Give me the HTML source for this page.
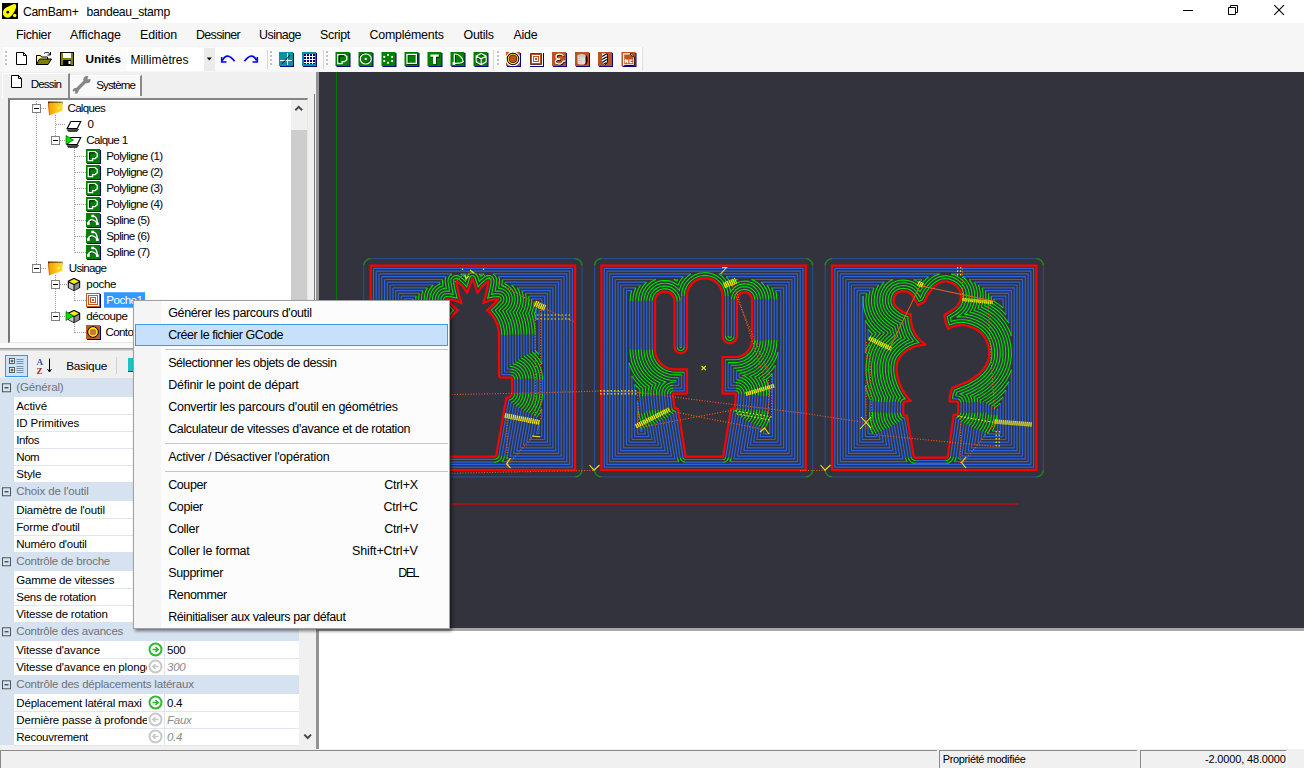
<!DOCTYPE html>
<html lang="fr">
<head>
<meta charset="utf-8">
<title>CamBam+ bandeau_stamp</title>
<style>
*{box-sizing:border-box;margin:0;padding:0}
html,body{width:1304px;height:768px;overflow:hidden;background:#f0f0f0}
body{position:relative;font-family:"Liberation Sans",sans-serif;font-size:12px;color:#000}
.abs{position:absolute}
.t{position:absolute;white-space:nowrap;line-height:1}
/* title bar */
#title{left:0;top:0;width:1304px;height:23px;background:#fff}
#menubar{left:0;top:23px;width:1304px;height:24px;background:#f6f6f6}
#toolbar{left:0;top:47px;width:1304px;height:25px;background:#f6f6f6}
#strip{left:3px;top:47px;width:640px;height:24px;background:linear-gradient(#fdfdfd,#f8f8f9);border-right:1px solid #e0e0e0}
.mi{position:absolute;top:28px;font-size:12.4px;line-height:14px;white-space:nowrap;color:#000}
/* left panel */
#left{left:0;top:72px;width:316px;height:677px;background:#f0f0f0}
#tree{left:8px;top:98px;width:300px;height:245px;background:#fff;border:1px solid #e6e6e6;border-top:2px solid #858585;border-left:2px solid #757575}
.tr{position:absolute;font-size:11px;line-height:13px;white-space:nowrap}
/* property grid */
.cat{position:absolute;left:0;width:299px;background:#d7e2f0}
.catt{position:absolute;left:16.300px;font-size:11.500px;color:#6d727c;white-space:nowrap;line-height:13px}
.pl{position:absolute;left:16.300px;font-size:11.500px;white-space:nowrap;line-height:13px;color:#000}
.pv{position:absolute;left:167px;font-size:11.500px;letter-spacing:-.250px;white-space:nowrap;line-height:13px}
/* context menu */
#ctx{left:133px;top:300px;width:317px;height:329px;background:#fcfcfc;border:1px solid #a0a0a0;box-shadow:2px 2px 3px rgba(0,0,0,.5)}
.cm{position:absolute;left:34px;font-size:12.4px;line-height:14px;white-space:nowrap;color:#000}
.ck{position:absolute;right:31px;font-size:12.4px;line-height:14px;white-space:nowrap;color:#000;text-align:right}
.sep{position:absolute;left:30px;width:283px;height:1px;background:#bdbdbd}
</style>
</head>
<body>
<!-- ===== title bar ===== -->
<div class="abs" id="title"></div>
<svg class="abs" style="left:2px;top:3px" width="16" height="16" viewBox="0 0 16 16">
  <rect width="16" height="16" fill="#000"/>
  <path d="M13.200 1.300 C15.200 2.300 14 6 12 9.200 C10.200 12.400 8 15.200 4.800 14.600 C1.400 14 0.200 10.600 1.300 7.800 C2.500 4.900 5.800 4 8.400 2.600 C10.300 1.600 12 0.600 13.200 1.300Z" fill="#ffff00"/>
  <circle cx="5.8" cy="9.2" r="1.35" fill="#000"/>
  <circle cx="12.7" cy="12.6" r="1.75" fill="#ffff00"/>
</svg>
<svg class="abs" style="left:1170px;top:0" width="134" height="23" viewBox="0 0 134 23" fill="none" stroke="#000" stroke-width="1">
  <path d="M13 10.5H23"/>
  <path d="M58.5 7.5h7v7h-7z M60.5 7.5v-2h7v7h-2"/>
  <path d="M104.3 5.2l9.6 9.6M113.9 5.2l-9.6 9.6" stroke-width="1.1"/>
</svg>
<!-- ===== menu bar ===== -->
<div class="abs" id="menubar"></div>
<!-- ===== toolbar ===== -->
<div class="abs" id="toolbar"></div>
<div class="abs" id="strip"></div>
<svg class="abs" style="left:0;top:47px" width="660" height="25" viewBox="0 0 660 25">
  <defs>
    <g id="grip" fill="#c3c3c3"><rect x="0" y="4" width="2" height="2"/><rect x="0" y="8" width="2" height="2"/><rect x="0" y="12" width="2" height="2"/><rect x="0" y="16" width="2" height="2"/></g>
    <g id="tb"><rect x="1" y="1" width="14" height="14" fill="#000080"/></g>
  </defs>
  <use href="#grip" x="5" y="0"/>
  <!-- new -->
  <path d="M16.5 5.5h7l3 3v9h-10z" fill="#fff" stroke="#000"/><path d="M23.5 5.5v3h3" fill="none" stroke="#000"/>
  <!-- open -->
  <path d="M36.5 17.5v-9h4l1 1.5h6v2" fill="#ffff80" stroke="#000" stroke-width="1"/>
  <path d="M36.5 17.5l3-5.5h12l-3.5 5.5z" fill="#808000" stroke="#000" stroke-width="1"/>
  <path d="M44 6.5c2-1.5 4.5-1.5 6 .8M50.5 5v3h-3" fill="none" stroke="#000" stroke-width="1"/>
  <!-- save -->
  <rect x="60.5" y="5.500" width="13" height="13" fill="#808000" stroke="#000"/>
  <rect x="63" y="6" width="8" height="5" fill="#fff"/><rect x="63" y="13" width="8" height="5" fill="#000"/><rect x="68.500" y="14" width="2" height="3" fill="#fff"/>
  <!-- combo -->
  <rect x="126" y="1" width="78" height="23" fill="#fff"/>
  <rect x="204" y="1" width="11" height="23" fill="#ebebeb"/>
  <path d="M206.800 10.500h5l-2.500 3z" fill="#000"/>
  <!-- undo / redo -->
  <path d="M222.300 13.500Q227 4.500 234.600 14.300" fill="none" stroke="#00f" stroke-width="1.700"/><path d="M220.900 10v5.800h5.600v-1.600h-4v-4.200z" fill="#00f"/>
  <path d="M256.700 13.500Q252 4.500 244.400 14.300" fill="none" stroke="#00f" stroke-width="1.700"/><path d="M258.100 10v5.800h-5.600v-1.600h4v-4.200z" fill="#00f"/>
  <rect x="267" y="3" width="1" height="19" fill="#d8d8d8"/>
  <use href="#grip" x="270" y="0"/>
  <!-- snap -->
  <g transform="translate(279,5)"><rect x="1" y="1" width="14" height="14" fill="#000080"/><rect width="14" height="14" fill="#0892a5"/>
    <path d="M8.500 1v12M1 8.500h12" stroke="#fff" stroke-width="1"/><path d="M3 12l8-9" stroke="#003" stroke-width="1"/></g>
  <!-- grid -->
  <g transform="translate(302,5)"><rect x="1" y="1" width="14" height="14" fill="#000080"/><rect width="14" height="14" fill="#0892a5"/>
    <rect x="2" y="2" width="11" height="10" fill="#000080"/>
    <path d="M2 4.500h11M2 7.500h11M2 10.500h11M4.500 2v10M7.500 2v10M10.500 2v10" stroke="#fff" stroke-width="1"/></g>
  <rect x="323" y="3" width="1" height="19" fill="#d8d8d8"/>
  <use href="#grip" x="326" y="0"/>
  <!-- green icons -->
  <g transform="translate(335.500,5)"><rect x="1" y="1" width="14" height="14" fill="#000080"/><rect width="14" height="14" fill="#008000"/>
    <path d="M2.300 2.600h6.700l2.300 1.900v3.200l-2.300 1.900h-2.400v2.100h-4.300z" fill="#008000" stroke="#fff" stroke-width="1.300"/><path d="M3.600 10.300v-6.400h5" stroke="#000" stroke-width="1" fill="none"/></g>
  <g transform="translate(358.500,5)"><rect x="1" y="1" width="14" height="14" fill="#000080"/><rect width="14" height="14" fill="#008000"/>
    <ellipse cx="6.600" cy="6.300" rx="5.500" ry="5.100" fill="none" stroke="#000" stroke-width="1"/><ellipse cx="7.200" cy="6.900" rx="5.500" ry="5.100" fill="none" stroke="#fff" stroke-width="1.200"/><rect x="6.200" y="5.900" width="2" height="2" fill="#fff"/></g>
  <g transform="translate(381.500,5)"><rect x="1" y="1" width="14" height="14" fill="#000080"/><rect width="14" height="14" fill="#008000"/>
    <g fill="#fff"><rect x="5.600" y="1.900" width="1.900" height="1.900"/><rect x="9.700" y="3.900" width="1.900" height="1.900"/><rect x="9.700" y="8" width="1.900" height="1.900"/><rect x="5.600" y="9.800" width="1.900" height="1.900"/><rect x="1.800" y="8" width="1.900" height="1.900"/><rect x="1.800" y="3.900" width="1.900" height="1.900"/></g></g>
  <g transform="translate(404.500,5)"><rect x="1" y="1" width="14" height="14" fill="#000080"/><rect width="14" height="14" fill="#008000"/>
    <rect x="3.300" y="3.200" width="9.300" height="8.900" fill="none" stroke="#000" stroke-width="1"/><rect x="2.500" y="2.500" width="9.300" height="8.900" fill="none" stroke="#fff" stroke-width="1.300"/></g>
  <g transform="translate(427.500,5)"><rect x="1" y="1" width="14" height="14" fill="#000080"/><rect width="14" height="14" fill="#008000"/>
    <path d="M3.600 3h8.400v2.400h-2.700v7.200h-3v-7.200h-2.700z" fill="#000"/><path d="M2.900 2.400h8.400v2.400h-2.700v7.200h-3v-7.200h-2.700z" fill="#fff"/></g>
  <g transform="translate(450.500,5)"><rect x="1" y="1" width="14" height="14" fill="#000080"/><rect width="14" height="14" fill="#008000"/>
    <path d="M4.500 12.200v-9.600c4.500 0 8.400 3.300 9 7.600l-2 1.200z" fill="none" stroke="#000" stroke-width="1"/><path d="M3.800 11.600v-9.600c4.500 0 8.400 3.300 9 7.600l-2 1.200z" fill="none" stroke="#fff" stroke-width="1.200"/><rect x="2" y="10" width="2.800" height="2.800" fill="#fff"/></g>
  <g transform="translate(473.500,5)"><rect x="1" y="1" width="14" height="14" fill="#000080"/><rect width="14" height="14" fill="#008000"/>
    <path d="M7.600 1.500l5 2.700v5.600l-5 2.900-5-2.900v-5.600zM2.600 4.200l5 2.700 5-2.700M7.600 6.900v5.800" fill="none" stroke="#000" stroke-width="1" transform="translate(-.7,.6)"/>
    <path d="M7.600 1.500l5 2.700v5.600l-5 2.900-5-2.900v-5.600zM2.600 4.200l5 2.700 5-2.700M7.600 6.900v5.800" fill="none" stroke="#fff" stroke-width="1.200"/></g>
  <rect x="493" y="3" width="1" height="19" fill="#d8d8d8"/>
  <use href="#grip" x="497" y="0"/>
  <!-- orange icons -->
  <g transform="translate(506,5)"><rect x="1" y="1" width="14" height="14" fill="#000080"/><rect width="14" height="14" fill="#bf5221"/>
    <svg width="14" height="14" viewBox="0 0 14 14"><circle cx="7" cy="6.900" r="6.800" fill="none" stroke="#fff" stroke-width="1.300"/><circle cx="7" cy="6.900" r="5.700" fill="none" stroke="#000" stroke-width="1.100"/><circle cx="7" cy="6.900" r="4.700" fill="none" stroke="#ffff00" stroke-width="1.100"/><circle cx="7" cy="6.900" r="3.900" fill="none" stroke="#301000" stroke-width=".7"/></svg></g>
  <g transform="translate(529,5)"><rect x="1" y="1" width="14" height="14" fill="#000080"/><rect width="14" height="14" fill="#bf5221"/>
    <rect x=".600" y=".600" width="12.800" height="12.800" fill="none" stroke="#fff" stroke-width="1.200"/><rect x="1.700" y="1.700" width="10.600" height="10.600" fill="none" stroke="#3a1000" stroke-width=".7"/><rect x="3.500" y="3.500" width="7" height="7" fill="none" stroke="#fff" stroke-width="1"/><rect x="5.500" y="5.500" width="3" height="3" fill="none" stroke="#fff" stroke-width="1"/></g>
  <g transform="translate(552,5)"><rect x="1" y="1" width="14" height="14" fill="#000080"/><rect width="14" height="14" fill="#bf5221"/>
    <path d="M11.500 3.800c-2-2.600-7.500-2-7.500 1 0 1.800 2 2.300 4.500 2.300 -3 0-5 .8-5 2.600 0 2.600 4.500 3 6.500 1.300l1.500-1.800h2" fill="none" stroke="#000" stroke-width="1.200" transform="translate(.7,.7)"/>
    <path d="M11.500 3.800c-2-2.600-7.500-2-7.500 1 0 1.800 2 2.300 4.500 2.300 -3 0-5 .8-5 2.600 0 2.600 4.500 3 6.500 1.300l1.500-1.800h2" fill="none" stroke="#fff" stroke-width="1.300"/></g>
  <g transform="translate(575,5)"><rect x="1" y="1" width="14" height="14" fill="#000080"/><rect width="14" height="14" fill="#bf5221"/>
    <path d="M11.500 3.500c1.500 1 1.500 7 0 8.500l-2 1v-9z" fill="#300000"/><path d="M2.500 3.800v7.200c0 2 8 2 8 0V3.800" fill="#e4dcd8"/><ellipse cx="6.500" cy="3.800" rx="4" ry="1.900" fill="#c9c9cd"/><path d="M4 6v5.500M6 6.500v5.800" stroke="#c8a090" stroke-width=".8" stroke-dasharray="1 1"/></g>
  <g transform="translate(598,5)"><rect x="1" y="1" width="14" height="14" fill="#000080"/><rect width="14" height="14" fill="#bf5221"/>
    <path d="M4 1.600h5.200v9l-2.600 2.700-2.600-2.700z" fill="#fff"/><path d="M9.400 1.600v9l-2.600 2.700" fill="none" stroke="#000" stroke-width=".9"/><path d="M4.200 4.600l4.600-2.800M4.200 7.600l4.600-2.800M4.200 10.400l4.600-2.800M5.600 12.200l3-1.800" stroke="#000" stroke-width="1.200"/></g>
  <g transform="translate(621.500,5)"><rect x="1" y="1" width="14" height="14" fill="#000080"/><rect width="14" height="14" fill="#bf5221"/>
    <path d="M2.100 1.800h7l3 3v8h-10z" fill="none" stroke="#fff" stroke-width="1.200"/><path d="M12.800 4.600v8.900h-10" fill="none" stroke="#000" stroke-width=".9"/><path d="M8.800 1.400l3.600 3.600" stroke="#000" stroke-width="1.500"/><path d="M9.400 1.800l2.600 2.600" stroke="#fff" stroke-width=".7"/>
    <path d="M3.900 11.300v-3.800l.3 0 2 3.800v-3.800M10.800 8.100h-2.300v2.600h2.300" fill="none" stroke="#fff" stroke-width="1.200"/></g>
</svg>
<!-- ===== status bar ===== -->
<div class="abs" style="left:0;top:749px;width:1304px;height:19px;background:#f0f0f0"></div>
<div class="abs" style="left:0;top:750px;width:937px;height:18px;border-left:1px solid #8a8a8a;border-top:1px solid #8a8a8a"></div>
<div class="abs" style="left:939px;top:750px;width:198px;height:18px;border-left:1px solid #8a8a8a;border-top:1px solid #8a8a8a"></div>
<div class="abs" style="left:1140px;top:750px;width:147px;height:18px;border-left:1px solid #8a8a8a;border-top:1px solid #8a8a8a;border-right:1px solid #fff"></div>
<!-- ===== message panel under canvas ===== -->
<div class="abs" style="left:316px;top:72px;width:3px;height:677px;background:#939396"></div>
<div class="abs" style="left:319px;top:628px;width:985px;height:3px;background:#a8a8a8"></div>
<div class="abs" style="left:319px;top:631px;width:985px;height:118px;background:#fff"></div>

<div class="t" style="left:23px;top:4.8px;font-size:12.2px;line-height:14px;letter-spacing:-0.353px">CamBam+</div>
<div class="t" style="left:86.5px;top:4.8px;font-size:12.2px;line-height:14px;letter-spacing:-0.308px">bandeau_stamp</div>
<div class="t" style="left:16px;top:27.6px;font-size:12.4px;line-height:14px;letter-spacing:-0.315px">Fichier</div>
<div class="t" style="left:70px;top:27.6px;font-size:12.4px;line-height:14px;letter-spacing:-0.053px">Affichage</div>
<div class="t" style="left:140px;top:27.6px;font-size:12.4px;line-height:14px;letter-spacing:-0.131px">Edition</div>
<div class="t" style="left:196px;top:27.6px;font-size:12.4px;line-height:14px;letter-spacing:-0.616px">Dessiner</div>
<div class="t" style="left:259px;top:27.6px;font-size:12.4px;line-height:14px;letter-spacing:-0.499px">Usinage</div>
<div class="t" style="left:320px;top:27.6px;font-size:12.4px;line-height:14px;letter-spacing:-0.283px">Script</div>
<div class="t" style="left:369.5px;top:27.6px;font-size:12.4px;line-height:14px;letter-spacing:-0.209px">Compléments</div>
<div class="t" style="left:463.5px;top:27.6px;font-size:12.4px;line-height:14px;letter-spacing:-0.249px">Outils</div>
<div class="t" style="left:513.5px;top:27.6px;font-size:12.4px;line-height:14px;letter-spacing:-0.255px">Aide</div>
<div class="t" style="left:85.5px;top:51.9px;font-size:11.8px;line-height:14px;letter-spacing:-0.094px;font-weight:bold">Unités</div>
<div class="t" style="left:130.5px;top:52.6px;font-size:12px;line-height:14px;letter-spacing:0.079px">Millimètres</div>
<div class="t" style="left:942.7px;top:753px;font-size:11px;line-height:13px;letter-spacing:-0.359px">Propriété modifiée</div>
<div class="t" style="left:1205px;top:753px;font-size:11px;line-height:13px;letter-spacing:-0.155px">-2.0000, 48.0000</div>

<svg class="abs" style="left:319px;top:72px" width="985" height="556" viewBox="319 72 985 556">
<rect x="319" y="72" width="985" height="556" fill="#33333d"/>
<path d="M336.500 72V628" stroke="#007a00" stroke-width="1"/>
<path d="M370 504H1018" stroke="#ff0000" stroke-width="1"/>
<path d="M370.7 258.7H575.1M582 265.6V470M575.1 476.9H370.7M363.8 470V265.6" stroke="#2c4f96" stroke-width="1" fill="none"/>
<path d="M363.8 265.6A6.9 6.9 0 0 1 370.7 258.7M575.1 258.7A6.9 6.9 0 0 1 582 265.6M582 470A6.9 6.9 0 0 1 575.1 476.9M370.7 476.9A6.9 6.9 0 0 1 363.8 470" stroke="#1f8a1f" stroke-width="1.300" fill="none"/>
<path d="M601.4 258.7H805.8M812.7 265.6V470M805.8 476.9H601.4M594.5 470V265.6" stroke="#2c4f96" stroke-width="1" fill="none"/>
<path d="M594.5 265.6A6.9 6.9 0 0 1 601.4 258.7M805.8 258.7A6.9 6.9 0 0 1 812.7 265.6M812.7 470A6.9 6.9 0 0 1 805.8 476.9M601.4 476.9A6.9 6.9 0 0 1 594.5 470" stroke="#1f8a1f" stroke-width="1.300" fill="none"/>
<path d="M832 258.7H1036.4M1043.3 265.6V470M1036.4 476.9H832M825.1 470V265.6" stroke="#2c4f96" stroke-width="1" fill="none"/>
<path d="M825.1 265.6A6.9 6.9 0 0 1 832 258.7M1036.4 258.7A6.9 6.9 0 0 1 1043.3 265.6M1043.3 470A6.9 6.9 0 0 1 1036.4 476.9M832 476.9A6.9 6.9 0 0 1 825.1 470" stroke="#1f8a1f" stroke-width="1.300" fill="none"/>
<path d="M373.5 268.4l0 198.8 198.8 0 0-198.8-198.8 0M430 393.5l0-13.8M434.9 374.7l8.1 0 0-39.7M501.8 335l0 39.7 8.6 0M514.8 379.1l0 14.4M508.8 400.3l-9.7 54.8M494.2 459.4l-43.6 0M445.7 455.1l-9.7-54.8M376.2 271.2l0 193.2 193.4 0 0-193.2-193.4 0M427.2 393.5l0-13.8M434.3 372l5.9-0.1 0.1-37M504.5 334.9l0.1 37 5.9 0.1M517.5 379l0 14.5M511.2 402.5l-9.4 53.3M494.1 462.2l-43.4 0M443 455.8l-9.4-53.3M507.3 334.9l0 34.3 3.2 0M520.3 379l0 14.5M513.7 404.4l-9.2 52M501.9 461.7l64.9 0 0-187.8-74 0M484.2 273.9l-4.8 0M465.4 273.9l-4.8 0M379 273.9l0 187.8 63.9 0M440.3 456.4l-9.2-52M424.5 393.5l0-14.5M434.3 369.2l3.2 0 0-34.3M452 273.9l-73 0M510.1 334.8l0 31.6M523.1 378.9l0 14.6M516.2 406l-8.9 50.5M506.7 458.9l57.3 0 0-182.2-65.3 0M381.8 276.7l0 182.2 56.3 0M437.5 456.5l-8.9-50.5M421.7 393.5l0-14.6M434.7 366.4l0-31.6M446.1 276.7l-64.3 0M512.9 334.8l0 29.1M525.9 378.8l0 14.7M518.7 407.6l-8.5 48.5 51 0 0-176.6-58.9 0M384.6 279.5l0 176.6 50 0-8.5-48.5M418.9 393.5l0-14.7M431.9 363.9l0-29.1M442.5 279.5l-57.9 0M515.6 334.7l0 27M528.6 378.8l0 14.7M521.3 409.2l-7.8 44.2 45 0 0-171.2-53.4 0M387.3 282.2l0 171.2 44 0-7.8-44.2M416.1 393.5l0.1-14.7M429.1 361.7l0.1-27M439.7 282.2l-52.4 0M518.4 334.7l0 25M531.4 378.7l0 14.8M523.8 410.6l-7 40 38.9 0 0-165.6-44.1 0M390.1 285l0 165.6 37.9 0-7-40M413.4 393.5l0-14.8M426.4 359.7l0-25M433.2 285l-43.1 0M521.2 334.6l0 23.4M534.2 379.2l0 14.3M526.4 411.9l-6.3 35.9 32.8 0 0-160-35.5 0M392.9 287.8l0 160 31.8 0-6.3-35.9M410.6 393.5l0-14.3M423.6 358l0-23.4M427.4 287.8l-34.5 0M524 334.6l0 21.7M537 379.7l0 13.8M529 413.2l-5.6 31.8 26.7 0 0-154.4-28.3 0M395.7 290.6l0 154.4 25.7 0-5.6-31.8M407.8 393.5l0-13.8M420.8 356.3l0-21.7M423 290.6l-27.3 0M526.7 334.6l0.1 20.2M539.8 379.7l0 13.8M531.6 414.5l-4.9 27.7 20.7 0 0-148.8-21.9 0M398.4 293.4l0 148.8 19.7 0-4.9-27.7M405 393.5l0.1-15M418 354.8l0.1-20.2M419.3 293.4l-20.9 0M529.5 334.5l0 18.9M542.5 379.7l0 13.8M534.2 415.8l-4.2 23.7 14.6 0 0-143.4-15.8 0M401.2 296.1l0 143.4 13.6 0-4.2-23.7M402.3 393.5l0-15M415.3 353.4l0-18.9M416 296.1l-14.8 0M532.3 334.5l0 17.5M541.8 364l0-65.1-10.1 0M404 298.9l0 63.2M412.5 352l0-17.5M413.1 298.9l-9.1 0M404 436.7l7.5 0-3.5-19.7M404 410.9l0 25.8M541.8 436.7l0-27.8M536.8 417l-3.5 19.7 8.5 0M535.1 334.4l0 16.3M539 354.7l0-53-4.6 0M406.8 301.7l0 51.9M409.7 350.7l0-16.3M410.4 301.7l-3.6 0M406.8 433.9l1.3 0-1.3-7.8 0 7.8M539 433.9l0-13.5-2.3 13.5 2.3 0M409.6 311.6l0 4.4M536.2 320l0-12" stroke="#2a63dc" stroke-width="1.200" fill="none"/>
<path d="M436 400.3l-2-0.7-1.3-0.8-1-1-0.5-0.8-0.8-1.8-0.4-1.7M430 379.7l0.2-1.5 0.3-1 0.4-0.6 0.7-0.8 0.9-0.6 1-0.3 1.4-0.2M443 335l0.2-3.4 0.2-1.8 0.7-3.3 0.5-1.7 1.1-3.2 1.5-3.1 1.8-2.9 1.1-1.5 2.1-2.5 1.3-1.4-4.7-4.4-4.4-4.6-0.7-1.4 0.2-1.6 1-1.2 1.5-0.5 3.4 0.2 1.9 0.2 3.2 0.7 2.2 0.7-1.9-7.7-0.9-4.6-0.7-4.6 0.2-1.6 1-1.1 1.5-0.5 1.6 0.5 1.3 0.9 1.6 1.2 2.5 2.3 1.3 1.4 2 2.3 3.2-9.3 0.7-1.1 1.2-0.7 1.4 0 1.2 0.7 0.7 1.1 3.2 9.3 2-2.3 1.3-1.4 2.5-2.3 1.6-1.2 1.3-0.9 1.6-0.5 1.5 0.5 1 1.1 0.2 1.6-0.7 4.6-0.9 4.6-1.9 7.7 2.2-0.7 3.2-0.7 1.9-0.2 3.4-0.2 1.5 0.5 1 1.2 0.2 1.6-0.7 1.4-1.1 1.2-3.4 3.4-4.6 4.4 1.3 1.4 2.1 2.5 1.1 1.5 1.8 2.9 1.5 3.1 1.1 3.2 0.5 1.7 0.7 3.3 0.2 1.8 0.2 3.4M510.4 374.7l1.5 0.3 1.3 0.8 0.7 0.8 0.6 1 0.3 1.5M514.8 393.5l-0.1 0.7-0.3 1-0.5 1.3-1.2 1.7-1.1 1-0.8 0.4-2 0.7M499.1 455.1l-0.4 1.5-0.9 1.3-0.8 0.7-0.9 0.5-1 0.2-0.9 0.1M450.6 459.4l-0.9-0.1-1-0.2-0.9-0.5-0.5-0.4-0.9-1.1-0.5-1-0.2-1M432.6 402l-1.7-1.2-1.5-1.5-1-1.6-0.7-1.8-0.3-1-0.2-1.4M427.2 379.7l0.2-1.6 0.4-1.5 0.8-1.6 1.3-1.4 1.6-1 1.5-0.5 1.3-0.1M440.3 334.9l0.1-3.4 0.3-2.2 0.3-1.8 0.8-3.4 0.7-2 1.4-3.2 1-1.9 1.8-2.9 1.2-1.7 1.7-2.1-3.8-3.6-3.5-3.6-1.1-1.8-0.3-2.2 0.4-2.1 1.3-1.7 1.8-1.2 2.1-0.3 1.6 0 2.2 0.1 2.9 0.5-1.3-6.3-1.1-6.3 0.1-2.1 0.9-1.9 1.5-1.5 2-0.8 2.2 0.1 1.9 0.8 1.4 0.9 3 2.4 1.7 1.7 1.6-4.8 1.2-1.9 1.9-1.4 2.2-0.5 2.2 0.5 1.9 1.4 1.2 1.9 1.6 4.8 1.7-1.7 3-2.4 1.4-0.9 1.9-0.8 2.2-0.1 2 0.8 1.5 1.5 0.9 1.9 0.1 2.1-1.1 6.3-1.3 6.3 2.9-0.5 2.2-0.1 1.6 0 2.1 0.3 1.8 1.2 1.3 1.7 0.4 2.1-0.3 2.2-1.1 1.8-3.5 3.6-3.8 3.6 1.7 2.1 1.2 1.7 1.8 2.9 1 1.9 1.4 3.2 0.7 2 0.8 3.4 0.3 1.8 0.3 2.2 0.1 3.4M510.5 372l1.3 0.1 1.5 0.5 1.6 1 1.3 1.4 0.8 1.6 0.4 1.1 0.1 1.3M517.5 393.5l-0.1 1.4-0.3 1-0.7 1.8-1 1.6-1.5 1.5-1 0.8-1.7 0.9M501.8 455.8l-0.5 1.8-0.8 1.3-0.7 1-1.4 1.1-1.5 0.7-1.4 0.4-1.4 0.1M450.7 462.2l-1.4-0.1-1.4-0.4-1.5-0.7-1.1-0.8-1.3-1.6-0.6-1.4-0.4-1.4M433.6 402.5l-1-0.5M492.8 273.9l1 0.7 1.5 1.5 1 1.9 0.5 2.1-0.1 2.2-1.5 8.8 3.1-0.1 2.1 0.2 2 0.8 1.7 1.3 1.4 1.7 0.9 1.9 0.3 2.1-0.2 2.2-0.8 2-1.2 1.8-5.5 5.6 2.6 3.7 1.7 3.1 1 2.2 1.2 3.4 0.6 1.9 0.8 4.4 0.4 3.5 0 2.1M510.5 369.2l1.8 0.2 2.1 0.7 1.8 1 1.9 1.9 1.3 2.1 0.7 2.1 0.2 1.8M520.3 393.5l-0.2 2.1-0.3 1-0.8 2.2-1.3 2.1-1.9 2-2.1 1.5M504.5 456.4l-0.6 2.2-1 1.8-1 1.3M479.4 273.9l1.1 2.6 1.9-1.4 1.8-1.2M460.6 273.9l1.8 1.2 1.9 1.4 1.1-2.6M442.9 461.7l-1-1.3-1-1.8-0.6-2.2M431.1 404.4l-2.1-1.5-1.9-2-1.3-2.1-0.8-2.2-0.3-1-0.2-2.1M424.5 379l0.2-1.8 0.7-2.1 1.3-2.1 1.9-1.9 1.8-1 2.1-0.7 1.8-0.2M437.5 334.9l0-2.1 0.4-3.5 0.8-4.4 0.6-1.9 1.2-3.4 1-2.2 1.7-3.1 2.6-3.7-5.5-5.6-1.2-1.8-0.8-2-0.2-2.2 0.3-2.1 0.9-1.9 1.4-1.7 1.7-1.3 2-0.8 2.1-0.2 3.1 0.1-1.5-8.8-0.1-2.2 0.5-2.1 1-1.9 1.5-1.5 1-0.7M498.7 276.7l0.6 1.7 0.3 2.1-0.1 2.2-1 5.5 1.9 0.2 2 0.6 2 0.9 1.7 1.4 1.4 1.6 1 1.9 0.7 2 0.3 2.2-0.1 2.1-0.6 2.1-1 1.9-1.3 1.8-3.8 4 2.3 3.8 1.6 3.4 0.8 2 1.5 4.6 0.8 4.2 0.3 3.7 0.1 2.2M510.1 366.4l2.8 0.3 2.2 0.7 3.1 1.8 2.1 2.1 1.7 2.7 0.8 2.6 0.3 2.3M523.1 393.5l-0.4 2.8-0.8 2.7-1.5 2.8-0.5 0.7-1.6 1.8-2.1 1.7M507.3 456.5l-0.6 2.4M438.1 458.9l-0.6-2.4M428.6 406l-2.1-1.7-1.6-1.8-0.5-0.7-1.5-2.8-0.8-2.7-0.4-2.8M421.7 378.9l0.3-2.3 0.8-2.6 1.7-2.7 2.1-2.1 3.1-1.8 2.2-0.7 2.8-0.3M434.7 334.8l0.1-2.2 0.3-3.7 0.8-4.2 1.5-4.6 0.8-2 1.6-3.4 2.3-3.8-3.8-4-1.3-1.8-1-1.9-0.6-2.1-0.1-2.1 0.3-2.2 0.7-2 1-1.9 1.4-1.6 1.7-1.4 2-0.9 2-0.6 1.9-0.2-1-5.5-0.1-2.2 0.3-2.1 0.6-1.7M502.3 279.5l0.1 1.5-0.2 2.1-0.4 2.8 0.6 0.1 2 0.8 1.9 1.1 1.7 1.4 1.4 1.6 1.2 1.8 0.9 2 0.5 2 0.3 2.2-0.1 2.1-0.5 2.2-0.7 2-1.1 1.9-1.3 1.6-2.4 2.5 2.3 4.3 1.7 4.2 1.4 4.4 0.8 4.5 0.4 3.9 0.1 2.3M512.9 363.9l3.3 0.9 1.9 0.9 1.8 1.3 1.4 1.2 1.2 1.4 1.3 1.8 0.9 1.9 0.8 2.8 0.4 2.7M525.9 393.5l-0.1 1.8-0.4 1.7-1 3.1-1.7 3.3-0.5 0.7-2 2.3-1.5 1.2M426.1 407.6l-1.5-1.2-2-2.3-0.5-0.7-1.7-3.3-1-3.1-0.4-1.7-0.1-1.8M418.9 378.8l0.4-2.7 0.8-2.8 0.9-1.9 1.3-1.8 1.2-1.4 1.4-1.2 1.8-1.3 1.9-0.9 3.3-0.9M431.9 334.8l0.1-2.3 0.4-3.9 0.8-4.5 1.4-4.4 1.7-4.2 2.3-4.3-2.4-2.5-1.3-1.6-1.1-1.9-0.7-2-0.5-2.2-0.1-2.1 0.3-2.2 0.5-2 0.9-2 1.2-1.8 1.4-1.6 1.7-1.4 1.9-1.1 2-0.8 0.6-0.1-0.4-2.8-0.2-2.1 0.1-1.5M505.1 282.2l-0.2 1.8 1.5 0.7 1.8 1.2 1.7 1.4 1.5 1.5 1.2 1.8 1 1.9 0.8 2 0.4 2.2 0.2 2.1 0 2.2-0.4 2.1-0.6 2.1-0.9 1.9-1.1 1.9-2.3 2.7 2 4.1 1.7 4.5 1.2 4.7 0.8 4.8 0.2 4.9M515.6 361.7l2 0.7 1.9 0.9 1.8 1.2 2 1.7 1.7 2 1.2 1.8 0.9 1.9 0.7 2 0.5 2.2 0.3 2.7M528.6 393.5l-0.1 2.1-0.4 2.1-1.1 3.6-0.4 0.8-1.6 2.9-1.6 2.1-2.1 2.1M423.5 409.2l-2.1-2.1-1.6-2.1-1.6-2.9-0.4-0.8-1.1-3.6-0.4-2.1-0.2-2.1M416.2 378.8l0.3-2.7 0.5-2.2 0.7-2 0.9-1.9 1.2-1.8 1.7-2 2-1.7 1.8-1.2 1.9-0.9 1.9-0.7M429.2 334.7l0.2-4.9 0.8-4.8 1.2-4.7 1.7-4.5 2-4.1-2.3-2.7-1.1-1.9-0.9-1.9-0.6-2.1-0.4-2.1 0-2.2 0.2-2.1 0.4-2.2 0.8-2 1-1.9 1.2-1.8 1.5-1.5 1.7-1.4 1.8-1.2 1.5-0.7-0.2-1.8M511.6 285l1.7 1.8 1.3 1.8 1.1 1.8 0.9 2 0.6 2 0.4 2.2 0.2 2.1 0 2.2-0.3 2.1-0.6 2.1-0.7 2-1 2-1.2 1.8-1 1.2 1.6 3.4 1.7 4.8 1.2 5 0.6 4.2 0.3 5.2M518.4 359.7l2.5 1.2 2.4 1.6 1.9 1.8 2 2.3 1.4 2 1.1 2.2 0.8 2.3 0.6 2.5 0.3 3.1M531.4 393.5l-0.1 2.5-0.5 2.4-1.3 4-1.2 2.5-1.5 2.4-1.3 1.6-1.7 1.7M421 410.6l-1.7-1.7-1.3-1.6-1.5-2.4-1.2-2.5-1.3-4-0.5-2.4-0.1-2.5M413.4 378.7l0.3-3.1 0.6-2.5 0.8-2.3 1.1-2.2 1.4-2 2-2.3 1.9-1.8 2.4-1.6 2.5-1.2M426.4 334.7l0.3-5.2 0.6-4.2 1.2-5 1.7-4.8 1.6-3.4-1-1.2-1.2-1.8-1-2-0.7-2-0.6-2.1-0.3-2.1 0-2.2 0.2-2.1 0.4-2.2 0.6-2 0.9-2 1.1-1.8 1.3-1.8 1.7-1.8M517.4 287.8l1.3 2.5 0.8 2 0.5 2.1 0.4 2.1 0.2 2.1-0.1 2.2-0.2 2.1-0.5 2.1-0.6 2.1-0.9 2-1 1.9-1 1.5 1.8 4.5 1.3 4.1 0.9 3.8 0.6 4.2 0.2 2.8 0.1 2.7M521.2 358l1.9 1 1.8 1.3 1.6 1.3 1.4 1.4 1.3 1.6 1.3 1.8 0.9 1.6 0.8 1.7 1 2.6 0.6 2.7 0.3 1.8 0.1 2.4M534.2 393.5l-0.1 1.9-0.2 1.8-0.4 1.9-0.8 2.7-1 2.6-1 1.9-1.7 2.6-1.5 1.9-1.1 1.1M418.4 411.9l-1.1-1.1-1.5-1.9-1.7-2.6-1-1.9-1-2.6-0.8-2.7-0.4-1.9-0.2-1.8-0.1-1.9M410.6 379.2l0.1-2.4 0.3-1.8 0.6-2.7 1-2.6 0.8-1.7 0.9-1.6 1.3-1.8 1.3-1.6 1.4-1.4 1.6-1.3 1.8-1.3 1.9-1M423.6 334.6l0.1-2.7 0.2-2.8 0.6-4.2 0.9-3.8 1.3-4.1 1.8-4.5-1-1.5-1-1.9-0.9-2-0.6-2.1-0.5-2.1-0.2-2.1-0.1-2.2 0.2-2.1 0.4-2.1 0.5-2.1 0.8-2 1.3-2.5M521.8 290.6l0.5 1.6 0.6 2.1 0.3 2.1 0.2 2.1-0.1 2.2-0.2 2.2-0.4 2.1-0.6 2.1-0.7 2-1 1.9-1 1.7 1.4 3.4 1.3 4.3 0.9 4 0.7 4.4 0.2 2.9 0.1 2.9M524 356.3l2.6 1.8 1.7 1.5 1.6 1.6 1.7 2 1.2 1.7 1.1 1.8 1 2.3 0.9 2.5 0.6 2.6 0.4 2.4 0.2 3.2M537 393.5l-0.1 2.1-0.3 2.1-0.4 2-0.9 3-1.1 2.8-1.1 2.2-1.3 2-2.2 2.9-0.6 0.6M415.8 413.2l-0.6-0.6-2.2-2.9-1.3-2-1.1-2.2-1.1-2.8-0.9-3-0.4-2-0.3-2.1-0.1-2.1M407.8 379.7l0.2-3.2 0.4-2.4 0.6-2.6 0.9-2.5 1-2.3 1.1-1.8 1.2-1.7 1.7-2 1.6-1.6 1.7-1.5 2.6-1.8M420.8 334.6l0.1-2.9 0.2-2.9 0.7-4.4 0.9-4 1.3-4.3 1.4-3.4-1-1.7-1-1.9-0.7-2-0.6-2.1-0.4-2.1-0.2-2.2-0.1-2.2 0.2-2.1 0.3-2.1 0.6-2.1 0.5-1.6M525.5 293.4l0.5 2.9 0.1 2.2 0 2.1-0.2 2.2-0.3 2.1-0.5 2.1-0.7 2.1-0.9 1.9-1 2 1.4 3.8 1.2 4.2 0.9 4.5 0.4 3 0.3 3 0 3.1M526.8 354.8l1.5 1.1 1.9 1.6 1.8 1.8 1.8 2.2 1.4 1.9 1.1 2.1 1.2 2.5 1.2 3.6 0.6 2.4 0.3 2.3 0.2 3.4M539.8 393.5l-0.1 2.3-0.3 2.4-0.5 2.2-1 3.2-1.2 3-1.2 2.4-1.4 2.3-1.7 2.4-0.8 0.8M413.2 414.5l-0.8-0.8-1.7-2.4-1.4-2.3-1.2-2.4-1.2-3-1-3.2-0.5-2.2-0.3-2.4-0.1-2.3M405.1 378.5l0.1-2.2 0.3-2.3 0.6-2.4 1.2-3.6 1.2-2.5 1.1-2.1 1.4-1.9 1.8-2.2 1.8-1.8 1.9-1.6 1.5-1.1M418.1 334.6l0-3.1 0.3-3 0.4-3 0.9-4.5 1.2-4.2 1.4-3.8-1-2-0.9-1.9-0.7-2.1-0.5-2.1-0.3-2.1-0.2-2.2 0-2.1 0.1-2.2 0.5-2.9M528.8 296.1l0.1 2.3 0 2.1-0.2 2.2-0.3 2.1-0.4 2.1-0.7 2.1-0.7 2-1 2.2 1.4 4.1 0.8 3 0.9 4.7 0.5 3.1 0.2 3.2 0.1 3.2M529.5 353.4l2.1 1.6 1.5 1.4 1.4 1.5 2.7 3.5 1.9 3.4 1.7 4.1 0.6 2 0.6 2.6 0.3 2.5 0.2 3.7M542.5 393.5l0 1.9-0.5 3.9-0.7 2.9-0.7 2.3-1.3 3.2-1.8 3.5-1.6 2.4-1.7 2.2M410.6 415.8l-1.7-2.2-1.6-2.4-1.8-3.5-1.3-3.2-0.7-2.3-0.7-2.9-0.3-1.9-0.2-3.9M402.3 378.5l0.2-2.5 0.3-2.5 0.6-2.6 0.6-2 1.7-4.1 1.9-3.4 2.7-3.5 1.4-1.5 1.5-1.4 2.1-1.6M415.3 334.5l0.1-3.2 0.2-3.2 0.5-3.1 0.9-4.7 0.8-3 1.4-4.1-1-2.2-0.7-2-0.7-2.1-0.4-2.1-0.3-2.1-0.2-2.2 0-2.1 0.1-2.3M531.7 298.9l-0.2 3.7-0.2 2.2-0.5 2.1-0.5 2.1-0.7 2-1 2.3 1.1 3.3 1.2 4.7 0.8 4.9 0.4 3.3 0.2 5M532.3 352l2.7 2.5 1.6 1.6 1.4 1.8 1.5 2 1.1 1.8 1.2 2.3M404 362.1l1.3-2.2 1.5-2 1.4-1.8 1.6-1.6 2.7-2.5M412.5 334.5l0.2-5 0.4-3.3 0.8-4.9 1.2-4.7 1.1-3.3-1-2.3-0.7-2-0.5-2.1-0.5-2.1-0.2-2.2-0.2-3.7M408 417l-1.9-2.5-2.1-3.6M541.8 408.9l-2 3.8-1.7 2.5-1.3 1.8M534.4 301.7l-0.3 3-0.4 2.1-1.2 4.2-0.9 2.5 1.2 3.8 0.8 3.3 0.9 5.3 0.4 3.4 0.2 5.1M535.1 350.7l1.9 1.8 2 2.2M406.8 353.6l2.9-2.9M409.7 334.4l0.2-5.1 0.4-3.4 0.9-5.3 0.8-3.3 1.2-3.8-0.9-2.5-1.2-4.2-0.4-2.1-0.3-3M409.6 316l0.7-2.4-0.7-2M536.2 308l-0.7 2.9-1 2.7 0.9 3 0.8 3.4" stroke="#00e400" stroke-width="1.100" fill="none"/>
<rect x="370.7" y="265.6" width="204.4" height="204.4" stroke="#ff0000" stroke-width="2.200" fill="none"/>
<path d="M472.4 278.4l5.2 14.6 2.6-4.2 2.1-2.5 2.3-2.3 3.9-3-1 6.1-1.3 6-1.6 5.9-1.3 4.4 2.8-1.5 4.5-1.6 3-0.7 4.8-0.3-5.5 5.6-5.9 5.3 3.5 3.2 2.1 2.4 1.7 2.6 1.6 2.8 1.2 2.9 1.3 4.6 0.6 4.7 0 42.1 0.2 0.8 0.6 0.9 1.2 0.3 9.8 0.1 0.4 0.2 0.5 0.5 0.3 0.9 0 14.3-0.7 1.9-1.1 1.4-1.7 0.7-2.1 0.1-10 57-0.5 1.3-1.1 0.7-44.3 0-0.9-0.2-0.7-0.5-0.5-1.3-10-57-2.1-0.1-1.7-0.7-1.1-1.4-0.7-1.9 0-13.8 0.3-1.4 0.5-0.5 0.9-0.3 9.7 0 1-0.5 0.4-0.7 0.2-0.8 0-42.1 0.6-4.7 1.3-4.6 1.2-2.9 1.6-2.8 1.7-2.6 2.1-2.4 3.5-3.2-5.9-5.3-5.5-5.6 4.8 0.3 3 0.7 4.5 1.6 2.8 1.5-1.3-4.4-1.6-5.9-1.3-6-1-6.1 3.9 3 2.3 2.3 2.1 2.5 2.6 4.2 5.2-14.6z" stroke="#ff0000" stroke-width="2.200" fill="none" stroke-linejoin="round"/>
<path d="M604.2 268.4l0 198.8 198.8 0 0-198.8-198.8 0M682.9 457.1l-7.4-45.9M671.6 408.3l-1.4-14.4M673 390.8l11.2 0 0-18.6M652.2 349.4l0-48.1M677.3 301.1l0 46.4M684.2 346.9l0-50.9M725.4 296l0 39.9M734.2 336.6l0-36.9M754.8 299.7l0 40.3M725.4 359.8l0 31 10.6 0M738.8 393.8l-1.2 14.4M733.4 411.2l-7.6 46M723.1 459.5l-37.5 0M606.9 271.2l0 193.2 193.3 0 0-193.2-193.3 0M680.1 457.6l-7-44.2M668.9 408.5l-1.4-14.4M673 388.1l8.5 0 0-13.2M649.5 349.4l0-48.1M680 300.9l0 45.9M681.5 346.8l0-50.8M728.1 296l0 39.8M731.4 336.2l0.1-36.9M757.5 299.3l0 40.7M728.1 362.6l0 25.5 7.9 0M741.5 394.1l-1.2 14.4M735.9 413.5l-7.3 44.1M723.1 462.2l-37.5 0M760.3 299.1l0 41.5M730.9 365.3l0 20 5.1 0M744.3 394.3l-1.2 14.4M738.4 415.5l-7.1 42.6M729.7 461.7l67.8 0 0-187.8-78.8 0M609.7 273.9l0 187.8 69.3 0M677.4 458l-6.8-42.6M666.1 408.8l-1.4-14.4M673 385.3l5.7 0 0-7.6M646.7 350l0-49.3M690.9 273.9l-81.2 0M763.1 298.9l0 41.9M733.7 368.1l0 14.4 2.3 0M747.1 394.5l-1.2 14.4M740.9 417.2l-7 41.7 60.8 0 0-182.2-68.4 0M612.5 276.7l0 182.2 62.3 0-6.8-41.9M663.4 409.1l-1.4-14.4M673 382.5l2.9 0 0-2M643.9 350.2l0-49.7M683.3 276.7l-70.8 0M765.9 299.7l0 40.3M736.5 370.8l0 9M749.8 394.8l-1.2 14.4M743.4 418.8l-6.1 37.3 54.6 0 0-176.6-40.5 0M737.6 279.5l-5.8 0M677.8 279.5l-4.1 0M615.3 279.5l0 176.6 56.2 0-6-37.5M660.6 409.3l-1.4-14.4M641.1 349.4l0-48.1M655.8 279.5l-40.5 0M768.6 299.7l0 40.3M739.2 373.3l0 4M752.6 395l-1.2 14.4M746 420.3l-5.5 33.1 48.6 0 0-171.2-27.9 0M618 282.2l0 171.2 50.2 0-5.3-33.4M657.8 409.6l-1.4-14.4M638.4 349.4l0-48.1M646.5 282.2l-28.5 0M771.4 298.3l0 41.7M755.4 395.2l-1.2 14.4M748.6 421.6l-4.8 29 42.6 0 0-165.6-19.4 0M620.8 285l0 165.6 44.2 0-4.7-29.2M655.1 409.9l-1.4-14.4M635.6 349.4l0-49.5M640.6 285l-19.8 0M774.2 299.7l0 40.3M758.1 395.4l-1.2 14.4M751.2 423l-4.1 24.8 36.5 0 0-160-11.9 0M623.6 287.8l0 160 38.1 0-4-25.2M652.3 410.1l-1.4-14.4M632.8 349.4l0-48.1M635.9 287.8l-12.3 0M777 299.7l0 40.3M760.9 395.7l-1.2 14.4M753.8 424.2l-3.5 20.8 30.5 0 0-154.4-5.1 0M626.4 290.6l0 154.4 32 0-3.3-21.2M649.5 410.4l-1.4-14.4M630 349.4l0-48.1M631.7 290.6l-5.3 0M629.1 442.2l26.1 0-2.8-17.2M646.8 410.7l-1.4-14.4M629.1 362.7l0 79.5M778 442.2l0-90M763.7 395.9l-1.2 14.4M756.4 425.4l-2.8 16.8 24.4 0M631.9 439.5l20 0-2.1-13.5M644.3 413.1l-1.7-16.5M631.9 375.8l0 63.7M775.3 439.5l0-74.3M766.4 396.1l-1.2 14.4M759 426.5l-2.1 13 18.4 0M634.7 436.7l14 0-1.5-9.6M641.5 413.4l-1.6-16.6M634.7 384.3l0 52.4M772.5 436.7l0-63.2M769.2 396.4l-1.2 14.4M761.7 427.6l-1.5 9.1 12.3 0M637.5 433.9l7.9 0-0.9-5.7M638.5 411.5l-1-10.5 0 32.9M769.7 433.9l0-16.9M764.3 428.7l-0.9 5.2 6.3 0M640.2 431.1l2 0-0.3-1.9M640.2 426.5l0 4.6" stroke="#2a63dc" stroke-width="1.200" fill="none"/>
<path d="M684.3 459.2l-0.9-0.9-0.5-1.2M675.5 411.2l-1.8-0.5-1.4-0.9-0.7-1.5M670.2 393.9l0.3-1.5 1-1.2 1.5-0.4M684.2 372.2l-9.2 0-3-0.2-3.2-0.7-3.1-1.1-2.8-1.5-3-2.2-2-2-1.9-2.6-1.8-3.2-1.1-3.1-0.6-2.8-0.3-3.4M652.2 301.3l0.1-1.6 0.4-1.7 0.7-2.1 0.9-1.5 1.1-1.4 1.3-1.3 1.4-1 1.6-0.9 1.7-0.6 1.8-0.3 1.7-0.1 1.8 0.1 1.4 0.3 1.7 0.6 1.6 0.9 1.7 1.3 1.2 1.3 1.1 1.4 0.8 1.6 0.6 1.7 0.3 1.3 0.2 1.8M677.3 347.5l0.1 0.5 0.4 0.9 0.7 0.7 0.8 0.6 0.5 0.1 1 0.2 0.9-0.2 0.5-0.1 0.8-0.6 0.7-0.7 0.4-0.9 0.1-1.1M684.2 296l0.3-3.1 0.6-2.9 1.1-2.7 1.4-2.6 1.5-2 2.1-2.1 2.6-2 2.6-1.4 2.8-1 2.5-0.5 2.9-0.3 2.9 0.2 2.9 0.6 2.8 1 2.6 1.4 2.3 1.7 2.1 2.1 1.8 2.3 1.4 2.6 1.1 2.7 0.6 2.9 0.3 3.1M725.4 335.9l0.2 1.3 0.5 1.2 0.8 0.9 1.1 0.7 1.2 0.4 0.6 0 0.6 0 1.2-0.4 1.1-0.7 0.8-0.9 0.5-1.2 0.2-0.6M734.2 299.7l0.1-1.3 0.3-1.4 0.6-1.7 0.8-1.3 0.9-1.2 1-1 1.2-0.8 1.3-0.7 1.4-0.5 1.4-0.3 1.1-0.1 1.9 0.2 1.4 0.3 1.3 0.5 1.3 0.8 1.2 0.9 1 1 0.6 0.9 0.8 1.3 0.5 1.3 0.3 1.4 0.2 1.7M754.8 340l-0.2 2.6-0.6 2.8-0.9 2.6-1.6 2.9-1.7 2.2-1.7 1.7-2.6 1.9-2.5 1.4-2.6 0.9-2.4 0.5-3 0.3-9.6 0M736 390.8l1.5 0.4 1 1.1 0.3 1.5M737.6 408.2l-0.7 1.6-1.4 0.9-2.1 0.5M725.8 457.2l-0.5 1.1-0.9 0.9-1.3 0.3M685.6 459.5l-1.3-0.3M683.7 461.9l-1.7-1-1.2-1.5-0.7-1.8M673.1 413.4l-2.2-1.1-1.4-1.6-0.6-2.2M667.5 394.1l0.2-2.2 1.2-2 1.9-1.4 2.2-0.4M681.5 374.9l-6.5 0-3.2-0.2-3.6-0.7-4.2-1.5-3.1-1.8-2.3-1.7-2.6-2.6-2.3-2.9-2.1-3.9-1-2.6-0.8-3.6-0.3-4M649.5 301.3l0.1-1.8 0.4-2.1 0.7-2.1 1.4-2.6 1.4-1.7 1.5-1.5 1.8-1.3 2-1 2-0.7 2.2-0.4 2.1-0.1 2.2 0.2 2.1 0.5 2.1 0.9 1.8 1.1 1.2 0.8 1.5 1.5 1.4 1.7 1.1 1.9 0.8 2 0.5 2.1 0.2 2.2M680 346.8l0.1 0.4 0.2 0.3 0.4 0.2 0.3-0.1 0.4-0.3 0.1-0.5M681.5 296l0.3-3.7 0.7-3.3 1.2-3.1 1.3-2.2 1.9-2.7 2.9-2.9 2.7-1.9 3-1.6 3.1-1.1 2.5-0.5 3.3-0.3 3.3 0.1 3.3 0.7 3.1 1.1 3 1.6 2.7 1.9 2.4 2.3 2 2.7 1.7 2.8 1.2 3.1 0.7 3.3 0.3 3.7M728.1 335.8l0.1 0.7 0.2 0.4 0.7 0.6 0.9 0.1 0.7-0.2 0.5-0.5 0.2-0.7M731.5 299.3l0.2-1.8 0.4-1.9 0.7-1.7 0.5-0.9 1.1-1.5 1.3-1.4 2.1-1.6 1.6-0.8 1-0.4 1.9-0.4 1.8-0.2 2.6 0.2 1.9 0.4 1.7 0.7 1.6 0.9 0.8 0.7 1.4 1.3 1.2 1.4 0.9 1.6 0.7 1.7 0.4 1.9 0.2 1.8M757.5 340l-0.1 2.8-0.9 3.9-1.2 3-1.1 2.2-2.4 3.2-2.3 2.2-2 1.4-3.5 2-2.3 0.8-3.1 0.8-3.6 0.3-6.9 0M736 388.1l2.2 0.4 1.9 1.3 1.1 2 0.3 2.3M740.3 408.5l-0.6 2.1-1.5 1.8-2.3 1.1M728.6 457.6l-0.7 1.8-1.2 1.5-1.7 1-1.9 0.3M685.6 462.2l-1.9-0.3M718.7 273.9l2.7 2 0.9 0.8 1.8 1.8 2.3 2.9 0.7 1 1.7 3.3 1.2 3.5 0.6 2.9 1.6-2.3 1.5-1.7 1.8-1.4 1-0.6 2-1 2.1-0.7 1.1-0.3 2.2-0.2 2.3 0.1 2.2 0.4 2.1 0.7 2 1 1 0.6 1.8 1.4 1.5 1.7 1.3 1.9 0.5 0.9 0.9 2.1 0.6 2.2 0.2 2.2M760.3 340.6l-0.3 3.6-0.9 3.5-0.8 2.3-0.5 1.1-1.8 3.1-2.3 2.8-2.6 2.5-2.9 2.1-3.2 1.7-3.4 1.1-2.4 0.6-3.6 0.3-4.7 0M736 385.3l2.3 0.3 2.1 0.9 1.7 1.5 1.3 1.8 0.8 2.2 0.1 2.3M743.1 408.7l-0.4 2-0.9 1.8-1.3 1.6-1.7 1.2-0.4 0.2M731.3 458.1l-0.7 2.2-0.9 1.4M679 461.7l-0.9-1.4-0.7-2.3M670.6 415.4l-1.9-1.3-1.3-1.6-0.9-1.7-0.4-2M664.7 394.4l0.1-2.3 0.7-2.2 1.3-1.9 1.8-1.5 2.1-0.9 2.3-0.3M678.7 377.7l-3.7 0-3.4-0.2-4-0.8-3.8-1.3-3.6-1.9-3.3-2.3-0.9-0.8-2.8-2.9-2.3-3.3-1.9-3.6-1.3-3.8-0.8-4-0.2-2.8M646.7 300.7l0.3-2.6 0.6-2.5 1-2.3 1.3-2.3 1.6-2 1.9-1.7 1.1-0.9 2.2-1.3 2.4-1 2.5-0.6 2.6-0.3 1.1 0 2.6 0.3 2.5 0.6 2.4 1 2.2 1.3 2 1.6 1 1 1.3 1.6 0.6-2.5 0.9-2.4 0.5-1.1 1.9-3.2 1.5-2 2.6-2.7 0.9-0.8 2.7-2M726.3 276.7l2.4 3 0.8 1.4 1.2 2.2 1.2 2.8 1.9-1.6 1.3-0.9 2.4-1.1 2.5-0.8 2.6-0.5 2.7-0.1 2.6 0.3 1.1 0.3 2.5 0.8 2.4 1.1 1.3 0.9 2.1 1.7 1.8 1.9 1.5 2.2 0.5 1 1 2.4 0.7 2.6 0.3 2.6M763.1 340.8l-0.4 4-1 3.9-0.8 2.2-1.9 3.6-2.3 3.3-1 1.2-2.9 2.7-3.3 2.3-3.6 1.9-3.8 1.3-3.9 0.7-4.5 0.2M736 382.5l2.3 0.2 2.2 0.7 2 1.2 1.7 1.5 1.3 1.8 1 2.1 0.5 2.2 0.1 2.3M745.9 408.9l-0.5 2.3-0.8 2.1-1.3 1.8-1.6 1.6-0.8 0.5M668 417l-0.5-0.3-1.6-1.6-1.3-1.8-0.8-2-0.4-2.2M662 394.7l0-2.3 0.5-2.3 0.9-2.1 1.4-1.9 1.7-1.5 2-1.1 2.2-0.8 2.3-0.2M675.9 380.5l-4.5-0.2-1.6-0.3-2.8-0.6-1.5-0.4-2.7-1-1.4-0.7-2.5-1.3-1.4-0.9-2.2-1.7-1.2-1-2.1-2.1-1-1.2-1.7-2.2-0.9-1.4-1.3-2.5-0.7-1.4-1-2.7-0.4-1.5-0.6-2.8-0.3-1.6-0.2-2.8M643.9 300.5l0.4-2.9 0.7-2.9 0.5-1.3 1.3-2.7 0.9-1.3 1.8-2.3 2.2-2.1 2.5-1.6 2.6-1.4 2.8-0.9 3-0.5 1.4-0.1 2.9 0.1 3 0.5 2.8 0.9 2.6 1.4 2.7 1.8 0.9-1.9 1.2-2.2 0.8-1.4 2.4-3M751.4 279.5l1.1 0.4 2.7 1.3 2.5 1.7 2.3 2.1 1.9 2.3 1.6 2.6 0.8 1.8 1 2.9 0.5 3 0.1 2.1M765.9 340l-0.2 3.4-0.3 2-0.5 2.3-0.6 1.9-0.8 2.3-0.9 1.8-1.1 2.1-1.1 1.7-1.4 1.9-1.3 1.5-1.8 1.8-1.5 1.3-1.9 1.4-1.7 1.1-2.1 1.1-1.8 0.9-2.3 0.8-1.9 0.6-2.3 0.5-3.9 0.4M736.5 379.8l1.6 0.1 2 0.4 1.9 0.8 1.9 1.1 1.6 1.3 1.4 1.5 1.2 1.7 0.8 1.9 0.6 2 0.3 2.1 0 2.1M748.6 409.2l-0.3 2.1-0.7 2-0.9 1.9-1.3 1.7-1.5 1.5-0.5 0.4M731.8 279.5l1.2 2.2 1.7-1 2.9-1.2M673.7 279.5l1.7 0.8 1.5 0.8 0.9-1.6M665.5 418.6l-1.7-1.7-1.2-1.7-1-1.8-0.7-2-0.3-2.1M659.2 394.9l-0.1-2.1 0.3-2 0.6-2.1 0.9-1.9 1.1-1.7 1.5-1.6 2.1-1.6-3.8-1.3-1.8-0.8-2.5-1.4-1.6-1.1-2.3-1.7-1.5-1.3-2-2-1.3-1.5-1.7-2.3-1.1-1.6-1.4-2.5-0.8-1.8-1-2.7-0.5-1.9-0.7-2.8-0.2-2-0.3-3.8M641.1 301.3l0.2-2.4 0.2-1.9 0.9-3.3 0.5-1.3 1.5-3 1.9-2.8 1.3-1.5 2.5-2.3 2.7-1.9 3-1.4M761.2 282.2l2.3 2.6 0.6 0.9 1.8 2.9 1 2.2 1.1 3.2 0.5 3.4 0.1 2.3M768.6 340l-0.2 3.6-0.3 2.4-0.5 2.3-0.7 2.3-0.8 2.3-1 2.1-1.2 2.2-1.3 2-1.4 1.9-1.6 1.8-1.7 1.7-1.8 1.6-1.9 1.4-2 1.3-2.2 1.2-2.1 1-2.3 0.8-2.3 0.7-2.3 0.5-1.8 0.2M739.2 377.3l1 0.2 2 0.6 1.9 1 1.8 1.1 1.6 1.4 1.4 1.5 1.3 1.8 1 1.8 0.7 2 0.5 2.1 0.2 2.1 0 2.1M751.4 409.4l-0.4 2.2-0.6 2.2-0.9 2.1-1.2 1.9-1.5 1.8-0.8 0.7M662.9 420l-1.9-2.2-1.2-1.8-1-2.1-0.6-2.1-0.4-2.2M656.4 395.2l0-2.1 0.2-2.1 0.4-2.1 0.8-2 1-1.9 1.5-2.1-1.6-0.7-2.5-1.4-2-1.2-2.3-1.8-1.8-1.5-2-2-1.5-1.8-1.8-2.3-1.2-2-1.4-2.5-1-2.2-1-2.6-0.7-2.3-0.6-2.8-0.3-2.4-0.2-4M638.4 301.3l0.1-2.6 0.6-3.7 0.7-2.3 1.5-3.4 1.9-3.2 0.9-1.2 2.4-2.7M767 285l1.4 2.3 1.5 3.5 1 3.7 0.5 3.8M771.4 340l-0.2 3.8-0.4 2.7-0.5 2.4-0.8 2.7-0.8 2.3-1.2 2.5-1.1 2.1-1.5 2.3-1.5 2-1.8 2.1-1.7 1.7-2.1 1.8-2 1.5-2.3 1.5-2.1 1.1-2.5 1.2-2.3 0.8-3.6 1 1.3 0.5 1.9 1.1 1.7 1.2 1.6 1.4 1.5 1.6 1.3 1.7 1 1.8 0.9 2 0.6 2 0.4 2.1 0.2 2.2 0 2.1M754.2 409.6l-0.3 2.2-0.6 2.1-0.8 2-0.9 1.9-1.2 1.8-1.8 2M660.3 421.4l-1.4-1.7-1.2-1.8-1-1.9-0.8-2-0.5-2-0.3-2.1M653.7 395.5l-0.1-2.2 0.1-2.1 0.4-2.2 0.6-2 0.9-2 0.6-1-3.7-2.2-2.2-1.7-2.1-1.8-2.1-2.1-1.8-2.1-1.7-2.2-1.5-2.4-1.3-2.5-1.2-2.5-1-2.7-0.8-2.6-0.6-2.8-0.4-2.8-0.2-4.2M635.6 299.9l0.5-4.1 1.1-4 1.6-3.9 1.8-2.9M771.7 287.8l0.8 2 1.1 4.1 0.5 3.1 0.1 2.7M774.2 340l-0.2 4-0.5 3.1-0.5 2.4-0.9 3-0.8 2.3-1.4 2.9-1.1 2.1-1.7 2.7-1.5 1.9-2.1 2.4-1.7 1.7-2.4 2.1-1.9 1.5-2.7 1.7-2.1 1.1-2.9 1.4 1.8 1.5 1.4 1.6 1.3 1.7 1.2 1.8 0.9 2 0.8 2 0.5 2.1 0.4 2.1 0.1 2.2-0.1 2.1M756.9 409.8l-0.2 2.1-0.5 2.1-0.7 2-0.8 1.9-1 1.8-1.2 1.8-1.3 1.5M657.7 422.6l-1.6-2.1-1.2-1.9-1-2-0.7-2.1-0.6-2.2-0.3-2.2M650.9 395.7l-0.1-2.1 0.1-2.2 0.3-2.2 0.6-2.1 0.7-2.1-1.6-1-2.3-1.7-2.4-2.1-2-2-2.1-2.4-1.7-2.3-1.7-2.6-1.4-2.6-1.3-2.8-1-2.7-0.9-3-0.6-2.8-0.4-3.2-0.3-4.4M632.8 301.3l0.2-3 0.7-4.5 0.9-3 1.3-3M775.7 290.6l0.9 4.5 0.4 4.6M777 340l-0.5 6-1.2 5.8-1.4 4-1.5 3.2-2.1 3.7-1 1.5-2.6 3.3-4.2 4.2-4.8 3.6-3 1.7 1.7 2.2 1.2 1.9 1 1.9 0.8 2 0.7 2.1 0.5 2.1 0.3 2.1 0.1 2.2-0.1 2.2M759.7 410.1l-0.3 2.2-0.5 2.1-0.6 2.1-0.8 2-1.1 2-1.1 1.8-1.5 1.9M655.1 423.8l-1.1-1.4-1.2-1.8-1-1.9-0.8-2-0.7-2.1-0.5-2.1-0.3-2.1M648.1 396l-0.1-2.2 0.1-2.2 0.3-2.1 0.8-3.3-3.7-2.8-3.3-3.2-2.3-2.7-2.7-3.8-2.3-4-1.5-3.3-1.6-4.3-1-4.5-0.5-3.6-0.3-4.6M630 301.3l0.4-4.9 0.6-3.2 0.7-2.6M652.4 425l-1.2-1.8-1.2-1.9-1-2-0.8-2.1-0.6-2.1-0.5-2.2-0.3-2.2M645.4 396.3l-0.1-2.2 0-2.2 0.2-2.2 0.5-2.4-2.3-1.8-1.4-1.4-3.4-3.4-2.9-3.9-1.2-1.6-1-1.7-2.2-4.3-1.8-4.5-0.7-2M778 352.2l-0.7 2.3-1.6 4.1-2 3.9-1.1 1.7-1.1 1.6-2.7 3.5-3 3.2-1.5 1.3-1.5 1.3-4 2.8 0.9 1.3 1.1 1.9 0.9 2 0.7 2 0.6 2.1 0.4 2.2 0.3 2.1 0 2.2 0 2.2M762.5 410.3l-0.3 2.1-0.4 2.1-0.6 2.1-0.7 2-0.9 1.9-1.1 1.9-2.1 3M649.8 426l-1.9-2.8-1-1.9-0.8-2-0.8-2-0.6-2.1-0.4-2.1M642.6 396.6l-0.1-2.3 0-2.2 0.4-3.7-2.6-2.3-3.5-3.6-3.1-4-1.8-2.7M775.3 365.2l-3 4.2-1.4 1.7-1.5 1.6-3.3 3.2-3.5 2.8 1.3 2.4 0.8 2.1 0.7 2.1 0.5 2.1 0.4 2.2 0.2 2.1 0 2.2-0.1 2.2M765.2 410.5l-0.2 2.2-0.5 2.2-0.5 2.1-0.8 2.1-0.8 2-1.1 2-1.1 1.9-1.2 1.5M647.2 427.1l-2.1-3.2-1-2-0.8-2-0.7-2.1-0.6-2.2-0.5-2.2M639.9 396.8l-0.2-2.2 0-2.2 0.3-2.8-3.7-3.6-1.6-1.7M772.5 373.5l-2.8 2.9-1.8 1.6-1.8 1.5 1.6 3.8 0.6 2.1 0.5 2.2 0.3 2.2 0.2 2.2 0 2.2-0.1 2.2M768 410.8l-0.7 4.2-1.1 4.2-1.7 3.9-1.1 1.9-1.7 2.6M644.5 428.2l-1.4-2.3-2-3.9-0.7-2.1-1.2-4.1-0.7-4.3M769.7 417l-0.8 2.7-1.7 4.1-1 1.9-1.9 3M641.9 429.2l-1.7-2.7" stroke="#00e400" stroke-width="1.100" fill="none"/>
<rect x="601.4" y="265.6" width="204.4" height="204.4" stroke="#ff0000" stroke-width="2.200" fill="none"/>
<path d="M685.6 456.7l-7.6-47.7-3.6-1-1.4-14.4 14 0 0-24.2-12 0-2.8-0.2-2.8-0.6-2.7-1-2.5-1.4-2.3-1.7-2-2-1.7-2.3-1.4-2.5-1-2.7-0.6-2.8-0.2-2.8 0.1-49.5 0.8-2.7 1.5-2.3 2.1-1.8 2.5-1.2 1.4-0.3 2.7 0 2.7 0.8 2.3 1.5 1 1 1.5 2.3 0.5 1.4 0.4 2.7 0.1 46.6 0.2 0.9 0.7 1.6 1.2 1.3 1.5 1 0.8 0.3 1.8 0.2 1.7-0.2 0.8-0.3 1.5-1 1.2-1.3 0.7-1.6 0.3-1.8 0-51 0.2-2.5 0.5-2.5 0.9-2.4 1.2-2.2 1.5-2.1 1.8-1.8 2.1-1.5 2.2-1.2 2.4-0.9 2.5-0.5 2.5-0.2 2.5 0.2 2.5 0.5 2.4 0.9 2.2 1.2 2.1 1.5 1.8 1.8 1.5 2.1 1.2 2.2 0.9 2.4 0.5 2.5 0.2 2.5 0.1 41 0.6 2 1.1 1.7 0.7 0.7 1.7 1.1 2 0.6 1 0.1 1-0.1 2-0.6 1.7-1.1 0.7-0.7 0.7-0.8 0.8-1.9 0.3-2 0-36.3 0.1-1.1 0.6-2 1.1-1.8 1.6-1.4 2-0.9 2.1-0.3 2.1 0.3 2 0.9 1.6 1.4 0.6 0.8 0.9 2 0.3 2.1 0 40.3-0.2 2.4-0.5 2.4-0.8 2.3-1.2 2.1-1.5 1.9-1.7 1.7-1.9 1.5-2.1 1.2-2.3 0.8-2.4 0.5-2.4 0.2-12.4 0 0 36.6 13.4 0-1.2 14.4-3.8 1-7.9 47.7-37.5 0z" stroke="#ff0000" stroke-width="2.200" fill="none" stroke-linejoin="round"/>
<path d="M834.8 268.4l0 198.8 198.8 0 0-198.8-198.8 0M900.2 413.1l0.4-10.2M952.4 398.7l5.4 0.2M961 402.6l0 10M956.2 417.5l-5.6 38.9M945.9 460.5l-30.3 0M911 456.9l-6.5-38.7M837.5 271.2l0 193.2 193.4 0 0-193.2-193.4 0M955.7 396l2.6 0.2M963.7 402.5l0.1 10.1M958.7 419.6l-5.3 37.2M946.3 463.2l-30.9 0M908.2 457.5l-6.1-37.2M897.5 413l0.4-11M966.5 402.4l0 10.2M961.2 421.4l-5.1 35.8M954.4 461.7l73.7 0 0-187.8-76.7 0M840.3 273.9l0 187.8 66.8 0M905.4 457.6l-5.9-35.6M894.7 412.9l0.4-10.9M939.6 273.9l-99.3 0M969.3 403l0 9.6M963.8 422.9l-4.9 34.7M958.6 458.9l66.7 0 0-182.2-62.7 0M843.1 276.7l0 182.2 59.8 0-5.9-35.3M891.9 412.8l0.5-11.2M928.6 276.7l-85.5 0M972.1 402.2l0 10.4M966.4 424.4l-4.5 31.7 60.6 0 0-176.6-53.3 0M921.9 279.5l-8 0M845.9 279.5l0 176.6 53.7 0-5.2-31.2M889.1 412.7l0.4-10.2M893 279.5l-47.1 0M974.8 402.1l0.1 10.5M969 425.7l-3.9 27.7 54.7 0 0-171.2-45.5 0M848.6 282.2l0 171.2 47.7 0-4.5-27.1M886.4 412.5l0.4-10.2M884.3 282.2l-35.7 0M977.6 402.3l0 10.3M971.6 427.1l-3.3 23.5 48.7 0 0-165.6-38.5 0M851.4 285l0 165.6 41.6 0-3.8-23M883.6 412.4l0.4-10.2M878.6 285l-27.2 0M980.4 403l0 9.6M974.2 428.3l-2.7 19.5 42.7 0 0-160-32 0M854.2 287.8l0 160 35.5 0-3.1-19M880.8 412.3l0.4-10.2M874 287.8l-19.8 0M1011.4 336.1l0-45.5-25.9 0M857 290.6l0 154.4 29.5 0-2.5-15M878 412.2l0.4-10.2M870.1 290.6l-13.1 0M1011.4 445l0-75.4M983.1 401.6l0.1 11M976.9 429.4l-2.2 15.6 36.7 0M1008.7 323.3l0-29.9-20.2 0M859.8 293.4l0 148.8 23.4 0-1.8-11.1M875.3 412.1l0.4-10.2M866.6 293.4l-6.8 0M1008.7 442.2l0-60.6M986 403.2l0 9.4M979.5 430.6l-1.6 11.6 30.8 0M1005.9 314.8l0-18.7-14.5 0M862.5 296.1l0 143.4 17.4 0-1.2-7.2M872.5 412l0.4-10.2M863.3 296.1l-0.8 0M1005.9 439.5l0-49.4M988.7 404.7l0 10M982.2 431.7l-1.1 7.8 24.8 0M1003.1 308l0-9.1-9 0M865.3 320.2l0 33M865.3 436.7l11.4 0-0.6-3.4M869.7 411.9l0.6-12M865.3 385.4l0 51.3M1003.1 436.7l0-39.6M991.5 406.2l-0.1 8.7M984.8 432.8l-0.5 3.9 18.8 0M868.1 329.3l0 10.6M868.1 433.9l5.1 0M868.1 422.2l0 11.7M1000.3 433.9l0-30.7M994.3 407.7l-0.1 7.1M987.5 433.9l12.8 0M997.6 431.1l0-22.3M997.1 409.2l-0.1 5.5M992.3 431.1l5.3 0" stroke="#2a63dc" stroke-width="1.200" fill="none"/>
<path d="M904.5 418.2l-1.3-0.4-0.6-0.4-0.9-0.8-0.7-0.9-0.6-1.7-0.2-0.9M900.6 402.9l0.2-1 0.3-0.8 0.4-0.7 0.7-0.6 0.7-0.5 0.8-0.2 1.4-0.2-1.6-2.1-1.8-2.6-2.3-4.2-2-4.4-1.6-4.6-1.3-4.7-0.7-4.8-0.1-1.8 0.1-3.2 0.4-3.4 0.5-1.7 0.5-1.7 0.8-1.6 0.9-1.6 1.1-1.4 1.2-1.4 3.6-3.4 2.5-2 1.3-0.9 3.1-1.8 1.5-0.7 3-1.1 1.7-0.5 2.9-0.6-3.3-3.5-1.9-2.7-1.7-2.9-1.5-3.1-1-3.2-0.8-3.4-0.5-3.3-0.2-4-2.4-0.6-1.6-0.6-3.3-1.6-1.4-0.9-2.7-2-1.3-1.2-1.2-1.3-1.1-1.5-1-1.7-0.8-2.3-0.2-2 0-1.6 0.4-2.4 0.6-1.5 0.9-1.8 1.3-1.6 1.6-1.4 1.8-1 1.9-0.7 2.2-0.4 1.6-0.1 1.9 0.1 1.8 0.3 1.9 0.5 1.8 0.9 1.6 1.2 1.4 1.3 1.3 1.5 1.8 2.7 0.9 1.5 1.6 3.1 3.3-1.8 0.8-2 1.5-2.9 1.5-2.7 1.8-2.6 2-2.6 1.2-1.3 2.3-2.2 1.5-1.2 2.9-1.7 1.6-0.7 1.7-0.6 1.8-0.4 1.8-0.2 1.9 0.1 1.8 0.2 2 0.6 3.1 1.3 3 1.9 1.6 1.2 1.1 1.1 1.1 1.4 1.2 1.8 0.8 1.7 0.5 1.4 0.5 2.1 0.1 1.8 0 1.6-0.2 2-0.4 1.8-0.5 1.7-0.7 1.7-0.8 1.6-0.9 1.2-1.1 1.4-1.4 1.4-2.6 2-7.7 4.8 0.8 4.3 0.9 2.9 0.6 1.5 1.7-0.8 1.8-0.7 1.6-0.4 3.1-0.6 3.5-0.2 1.7 0 3.1 0.4 1.8 0.3 3.1 0.9 1.7 0.6 2.9 1.3 1.6 0.8 2.7 1.7 2.6 2.1 2.5 2.5 1 1.4 1.8 2.6 1.5 3.2 0.6 1.5 0.9 3.1 0.4 1.8 0.5 3.1 0.2 3.5-0.1 3.2-0.2 1.6-0.9 3.5-0.5 1.6-1.3 2.9-0.9 1.5-1.9 2.8-2 2.5-1.2 1.3-2.2 2.1-2.5 2.1-4 2.8-2.7 1.5-2.8 1.6-5.7 2.6-8.6 3.4-1.3 4.3-0.7 4.2M957.8 398.9l1.3 0.6 0.7 0.5 0.5 0.7 0.4 0.7 0.3 1.2M961 412.6l-0.3 1.3-0.6 1-0.7 0.9-1.5 1.1-1.1 0.4-0.6 0.2M950.6 456.4l-0.2 1.1-0.4 0.7-0.8 1-0.7 0.5-1.2 0.6-1.4 0.2M915.6 460.5l-0.9-0.1-0.9-0.2-0.9-0.4-0.7-0.6-0.8-1-0.4-1.3M900.6 397.5l-2.9-4.7-2.2-4.6-1.9-4.7-1.4-4.8-0.9-5.1-0.3-3.5 0-4 0.6-3.9 0.5-2 0.7-1.9 1-1.9 0.8-1.3 1.2-1.7 1.2-1.4 2.6-2.6 1.4-1.3 2.6-2 3-2 3.3-1.6 3.6-1.4-1.3-1.8-1.9-2.8-1-1.9-1.5-3.3-1.1-3.2-0.8-3.5-0.6-3.6-0.1-2.2-2.3-0.8-2.1-1-3-1.7-1.7-1.3-2.7-2.2-1.4-1.5-1.4-1.7-1.1-2-0.9-2.4-0.2-0.9-0.3-2.5 0.1-2.4 0.3-1.6 0.8-2.4 1.1-2.2 1.6-2 1.9-1.7 2.3-1.4 2.4-0.8 2.3-0.5 2.7-0.2 2.2 0.2 2.4 0.4 2.3 0.8 2.2 1.2 1.2 1 1.6 1.5 1.6 1.9 2 2.8 1.3 2.3 1.2-2.7 1.5-2.9 1.8-2.9 2.1-2.8 2.1-2.5 1.5-1.6 2.7-2.2 1.6-1.1 2.2-1.2 1.9-0.8 1.5-0.4 2.1-0.5 2.1-0.2 2.2 0 2.1 0.3 2.1 0.5 2.4 0.9 3.1 1.7 2 1.3 2.7 2.4 1.7 2.1 0.9 1.2 1 2 0.8 2.1 0.5 2.7 0.2 2.1 0 1.6-0.3 2.6-0.3 1.5-0.5 2-1 2.4-1 1.8-0.9 1.3-1.3 1.6-1.4 1.4-1.5 1.3-3 2.1-4.9 2.9 0.9 3.7 2.6-0.8 1.8-0.4 3.6-0.5 3.7 0 3.6 0.3 3.8 0.9 1.7 0.5 3.1 1.2 3.5 1.7 3.1 2 2.9 2.3 2.6 2.7 2.2 3 1.7 3.2 1.4 3.4 0.6 1.7 0.8 3.2 0.6 3.8 0.2 3.6-0.2 3.7-0.5 3.3-0.6 2.2-1.2 3.1-1 2-1.8 3-2.2 2.9-2.3 2.6-2.5 2.4-2.6 2.2-2.8 1.9-4.1 2.5-3 1.6-4.3 2.1-4.3 1.8-4.7 1.8-0.9 3.7M958.3 396.2l1.1 0.3 0.9 0.4 1.4 1.1 0.9 1.1 0.7 1.3 0.3 1 0.1 1.1M963.8 412.6l-0.7 2.6-0.8 1.4-1.5 1.7-0.9 0.6-1.2 0.7M953.4 456.8l-0.5 1.7-0.6 1.2-0.8 1.2-1.1 0.9-1.6 0.9-1.2 0.4-1.3 0.1M915.4 463.2l-1.6-0.1-1.3-0.4-1.4-0.8-1.2-1-0.9-1.3-0.4-1-0.4-1.1M902.1 420.3l-1.6-1-1.3-1.4-0.9-1.5-0.6-1.5-0.2-1.9M897.9 402l0.3-1.1 0.4-1 0.8-1.3 1.2-1.1M951.4 273.9l3.3 1.2 3.3 1.8 1.8 1.2 1.8 1.4 2.2 2.1 1 1.2 1.4 2 1.2 2.2 0.9 2.5 0.7 3.4 0.2 2.3 0 1.6-0.3 3.1-0.4 1.5-0.6 2.3-1.2 2.9-0.7 1.3-1.3 2-2 2.5-2.7 2.4-3.3 2.4 2.3-0.3 2-0.1 3.9 0.2 3.9 0.7 3.8 1 3.9 1.5 3.5 1.7 3.4 2.2 2.7 2.2 2.9 2.9 1.6 2 1.9 3 1.8 3.5 1.4 3.7 0.9 3.8 0.6 3.8 0.3 3.9-0.2 3.9-0.3 2.5-0.8 3.4-0.9 2.5-1.4 3.2-1.2 2.1-2.2 3.2-2.4 2.9-2.3 2.5-2.7 2.4-2.9 2.2-3.1 2.1-3 1.8-4.4 2.3-4.4 1.9-5.1 2.1 1.7 0.8 1.7 1.2 1.3 1.6 1 1.9 0.4 1.5 0.2 1.5M966.5 412.6l-0.2 2-1 2.5-1.2 1.6-1 1.2-1.9 1.5M956.1 457.2l-0.2 1.3-0.4 1.1-1.1 2.1M907.1 461.7l-0.5-0.7-0.6-1.4-0.6-2M899.5 422l-0.7-0.5-1.7-1.8-1.3-2-0.7-2-0.4-2.8M895.1 402l0.4-1.9 0.7-1.7 0.8-1.2-1.9-3.3-1.6-3.1-1.3-3.3-1.7-4.7-1-3.7-0.8-3.6-0.4-3.8-0.1-3.4 0.2-4.1 0.4-2 0.5-2.2 0.7-2.1 1-2.2 1.6-2.7 1.3-1.7 2.4-2.6 1.6-1.5 2.5-2.2 1.9-1.4 2.9-1.8 3.9-2-1.1-1.8-1.2-2.1-0.9-1.8-1.2-3.3-0.7-2.2-0.9-3.4-0.6-4.4-3-1.3-3.5-2.1-3.3-2.5-1.7-1.6-1.7-1.8-0.9-1.3-1.4-2.3-1-2.8-0.6-2.9-0.1-1.4 0.2-2.9 0.6-2.9 1.1-2.8 0.8-1.4 1.8-2.4 1.1-1.1 1.2-1 1.4-0.9 2.7-1.3 2.6-0.8 2.5-0.3 1.6-0.1 2.4 0 2.5 0.4 2.7 0.7 2.7 1.3 2.4 1.6 2.4 2.4 2 2.6 1.8-2.9 2.9-4.1 2.3-2.9 1.8-1.8 2.8-2.3 2.4-1.6 3.4-1.6 2.2-0.8M962.6 276.7l1.5 1.3 1.8 1.9 1.7 2.1 1.6 2.5 1.2 2.6 0.5 1.5 0.7 2.8 0.3 2.7 0.1 2.7-0.3 2.6-0.4 2.6-0.7 2.5-1.4 3.4-1.3 2.3-1.6 2.2-1.6 1.8 3.1 0.4 4.1 1 3.4 1.1 3.8 1.6 3.7 2 2.2 1.6 3.4 2.7 2.6 2.7 1.9 2.3 2 3.1 1.3 2.5 1.6 3.9 1.2 4 0.8 4 0.4 4.1 0 3.7-0.2 2.8-0.6 3.6-0.8 2.9-1.3 3.4-1.2 2.6-1.9 3.1-1.5 2.1-2.2 2.8-1.7 1.8-2.8 2.6-2.9 2.4-3 2.2-3.1 1.9-3.1 1.7-3.1 1.6-4.8 2.1 1.2 1.5 1.2 2.1 0.7 2.5 0.2 2.4M969.3 412.6l-0.3 2.6-1.3 3.2-1.3 2-1.4 1.5-1.2 1M958.9 457.6l-0.3 1.3M897 423.6l-1.7-1.7-1.6-2.3-1.1-2.4-0.6-2.5-0.1-1.9M892.4 401.6l0.5-2.3 0.9-2.2-1.8-3.2-1.7-3.7-1.4-3.4-1.6-4.9-0.9-3.7-0.6-3.8-0.4-4 0-2.7 0.4-4.5 0.4-2.4 0.7-2.4 0.5-1.5 1.1-2.4 1.9-3.1 1.4-1.9 1.4-1.6 3.9-3.8 3.6-2.8 1.7-1.1 2.7-1.6-1.7-3.4-1.5-3.9-1.1-4-0.8-4.5-3.8-2-1.8-1.2-3-2.2-1.7-1.5-1.8-1.8-1.7-2.2-0.9-1.4-0.7-1.3-0.8-1.8-0.4-1.4-0.5-1.9-0.3-3.3 0.1-3.4 0.3-1.5 0.5-1.8 0.5-1.5 0.8-1.7 0.8-1.4 1.1-1.6 1-1.2 1.5-1.5 1.2-1 1.8-1.3 1.4-0.7 1.8-0.7 1.5-0.5 3-0.7 3.9-0.2 1.6 0.1 2.8 0.3 3.1 0.9 1.8 0.7 1.3 0.7 2.8 1.9 2.5 2.4 1.8-2.7 2.4-3.1 2.5-2.6 2.2-2M969.2 279.5l1.6 2.2 0.9 1.5 1.3 3 1 3.1 0.3 1.5 0.2 1.5 0.2 3 0 2.9-0.2 1.5-0.8 4.1-0.5 1.5-1 2.7-1.3 2.5-1 1.7 2.8 0.7 4.2 1.4 4 1.8 3.3 1.9 2.5 1.6 3 2.5 2.3 2.2 2.6 3 1.9 2.7 1.9 3.4 1.2 2.7 1.5 4.2 0.9 3.7 0.7 4.2 0.3 2.9 0 3.8-0.2 3.1-0.7 3.9-0.6 2.3-1.1 3.1-0.9 2.2-1.7 3.3-1.6 2.5-2.2 3-1.8 2.1-2.9 3-2.6 2.3-3.2 2.5-3.2 2.1-3.2 2-3.2 1.7-3.7 1.7 0.8 1.6 0.8 2.5 0.3 2.4M972.1 412.6l-0.2 2.2-0.5 2.2-1.2 2.6-1.6 2.5-2.2 2.3M913.9 279.5l1.8 0.9 2 1.2 1.5 1.2 2.7-3.3M894.4 424.9l-1.6-1.7-1.6-2.4-1.2-2.7-0.7-3-0.2-2.4M889.5 402.5l0.2-1.5 0.4-2.2 0.6-1.5-2-3.9-1.6-3.5-1.3-3.6-1.1-3.7-1-3.7-0.7-4.1-0.3-2.7-0.1-3.8 0.3-4.6 0.6-3.6 1.3-4.1 1.2-2.7 0.7-1.3 2.4-3.5 1.6-2 2-2 4.2-3.8 2.2-1.7 2.3-1.5-1.4-3.3-1.2-3.6-0.8-2.7-0.6-3.3-1.9-1-2.1-1.3-3.7-2.7-2.7-2.5-1.1-1.1-1.9-2.5-1.8-3-1-2.2-0.5-1.4-0.5-2.4-0.3-1.5-0.1-2.3 0-1.5 0.2-2.3 0.3-1.5 0.6-2.3 0.5-1.5 1-2.1 0.8-1.4 1.4-2 0.9-1.2 1.9-1.9 1.2-0.9 2.3-1.6 2.1-1M974.3 282.2l1.4 3.1 1 3.4 0.6 3.3 0.2 3.3 0 1.5-0.2 3.2-0.6 3.1-0.8 3-0.6 1.5-1.2 2.8 3.8 1.3 3.6 1.6 2.8 1.5 3.3 2.1 2.8 2.1 2.9 2.7 2.5 2.7 1.6 2.1 2.2 3.4 1.6 3 1.6 3.6 1 3.1 0.9 3.7 0.8 4.6 0.3 4.7-0.1 3.3-0.4 4-0.5 2.5-0.6 2.5-0.8 2.5-1 2.4-1.5 3.1-2 3.3-1.8 2.6-2.4 3-2 2.1-2.6 2.5-3.3 2.8-3.3 2.4-3.3 2.1-3.4 1.9-3 1.5 0.7 2.2 0.3 2.8M974.9 412.6l-0.2 2-0.3 2-0.6 1.9-0.8 1.8-1.8 2.9-2.2 2.5M891.8 426.3l-1.2-1.3-1-1.4-1.2-2.1-1.1-2.6-0.6-2.5-0.3-1.9 0-2M886.8 402.3l0.1-1.7 0.7-3.1-1.6-3.3-1.4-3.3-2.2-6-0.9-3.4-0.6-2.6-0.6-3.7-0.3-3-0.2-3.9 0.1-2.4 0.2-2.5 0.5-2.7 1.1-4.2 0.5-1.4 1.3-3 0.8-1.5 1.7-2.6 1.6-2.1 1.6-1.8 4.2-4.1 2.3-1.9 2.2-1.6-1.1-2.8-0.7-2.3-1.2-4.9-3-1.8-2.7-2-3.2-2.7-2.1-2.1-2.2-2.7-1.3-2-0.7-1.4-1.1-2.6-0.5-1.5-0.7-2.7-0.2-1.6-0.2-2.7 0-1.6 0.3-2.7 0.3-1.5 0.7-2.7 0.5-1.5 1.2-2.6 0.8-1.3 1.6-2.5 1.9-2.1M978.5 285l0.9 3.1 0.7 3.7 0.2 3.5 0 1.6-0.1 1.9-0.5 3.4-0.7 3.3-1.1 3.3 3.3 1.3 3.6 1.8 3.1 1.8 3.4 2.4 2.9 2.5 3 3.1 1.7 2.2 2.3 3.2 2.1 3.7 1.5 3.3 1.4 3.8 0.9 3.3 0.8 3.9 0.4 3.4 0.3 4-0.1 3.6-0.4 4.2-0.5 2.7-0.7 2.6-0.9 2.7-1 2.5-1.7 3.4-2 3.5-2 2.8-2.5 3.1-2.1 2.3-2.7 2.6-2.3 1.9-2.9 2.2-3.5 2.4-3.4 2.1-2.7 1.4 0.4 3.8M977.6 412.6l-0.1 2.3-0.4 2.3-0.7 2.2-1 2.2-2 3.3-1.8 2.2M889.2 427.6l-1.9-2.5-1.3-2.3-0.7-1.5-0.6-1.5-0.8-2.9-0.3-2.2 0-2.3M884 402.2l0.2-1.9 0.5-2.4-1.9-4-1.6-3.8-1.3-4-1.1-3.9-0.9-4.3-0.5-3.1-0.3-3.9 0-2.5 0-2.6 0.3-2.7 0.8-4.3 1.4-4.6 1.4-3.2 1-1.9 1.7-2.7 2.8-3.5 3.9-3.9 4.2-3.5-1.1-3.2-1-4-3-1.9-3.3-2.5-2.1-1.8-2.3-2.3-2.3-3-1.5-2.3-1.5-2.9-1-3-0.5-1.6-0.6-3.2-0.2-3.1 0.1-1.6 0.3-3.1 0.2-1.6 0.9-3.1 0.5-1.5 0.6-1.6 1.8-3.2M982.2 287.8l0.6 3.7 0.2 1.5 0.1 3.9-0.2 2.2-0.4 3.6-1.1 4.4 3.4 1.6 3.6 2.1 3.3 2.2 2.3 1.7 3.2 3 2 2.1 1.9 2.3 2.5 3.6 2.1 3.8 1.7 3.6 1.4 4 1 3.5 0.8 4 0.5 3.6 0.3 4.2-0.1 4-0.5 4.3-0.5 2.8-0.7 2.9-1 2.8-1 2.7-1.8 3.7-1.4 2.3-2.3 3.5-2.2 2.8-2.6 3-2.3 2.3-2.9 2.6-2.4 1.9-3 2.1-3.6 2.3-2.9 1.6 0.2 3M980.4 412.6l-0.1 2.1-0.3 2.1-0.5 2.1-0.7 2-0.9 1.9-1.2 2.2-1.4 2-1.1 1.3M886.6 428.8l-1.6-2.2-1.5-2.5-0.8-1.7-0.6-1.8-0.8-2.5-0.3-1.9-0.2-1.9 0-2M881.2 402.1l0.2-1.9 0.3-2-1.7-3.7-1.6-4-1.3-4.1-1-3.5-0.9-4.5-0.5-3.3-0.4-4.1 0-2.6 0.1-2.7 0.2-2.9 0.9-4.7 1.4-4.9 1.6-3.4 1.9-3.4 1.1-1.7 1.9-2.5 3.5-3.7 4.4-3.9-1.3-4.6-3.3-2.2-2.2-1.7-2.2-1.9-2.5-2.5-2.5-3.2-1.8-2.7-1.5-3.1-0.7-1.7-1-3.3-0.4-1.9-0.4-3.4 0-3.4 0.1-1.8 0.2-1.7 0.7-3.4 1.5-4.3M985.5 290.6l0.2 2.1 0.1 4.2-0.3 4-0.3 2.4-0.5 2.3 3.9 2 2.4 1.5 2.4 1.7 2.4 1.8 2.2 2 3.3 3.3 3 3.8 1.7 2.6 1.5 2.6 1.9 3.9 1.1 2.7 0.9 2.6M884 430l-1.4-1.8-1.6-2.8-0.9-2-0.7-2-0.8-2.7-0.3-2.2-0.2-2.1-0.1-2.2M878.4 402l0.4-3.4-1.4-3.1-1.6-4.1-1.4-4.2-1.2-4.4-0.8-3.8-0.5-3.6-0.3-4.2-0.1-2.8 0.1-2.9 0.3-3 0.5-3.2 0.4-1.9 1.5-5.1 1.7-3.7 2-3.7 1.3-1.9 2-2.6 3-3.2 3.8-3.6-0.5-1.8-2.5-1.7-2.3-1.8-2.4-2.1-2.6-2.6-1.8-2.2-2-2.7-1.6-2.9-1-2-1.2-3.4-0.6-2.1-0.4-2.1-0.5-3.6 0-2 0.1-3.6 0.6-3.6 0.7-2.8M1011.4 369.6l-1.9 4.7-2.1 4-1.4 2.4-1.6 2.3-3.3 4.2-3.6 3.7-4.3 3.8-4.9 3.7-5.2 3.2M983.2 412.6l-0.1 2.4-0.4 2.4-0.6 2.3-0.7 2.3-1 2.1-1.4 2.4-2.1 2.9M988.5 293.4l0.1 3.5-0.1 2.7-0.7 4.5 3.5 1.9 2.5 1.7 3.8 2.8 2.4 2.1 2.3 2.4 2.2 2.5 2 2.6 2.2 3.2M881.4 431.1l-1.6-2.2-1.2-2.2-1-2.2-1-2.9-0.7-2.3-0.4-2.4-0.2-2.4 0-2.4M875.7 401.9l0.2-2.9-1.6-3.8-1.6-4.3-1.4-4.4-0.8-3.1-0.8-3.9-0.5-3.8-0.4-4.3-0.1-2.9 0.2-4.7 0.7-5 0.9-3.6 0.7-2.4 1.6-4 2.1-4 3.1-4.6 3.2-3.9 3.3-3.2-2.2-1.6-2.6-2.1-3.9-3.9-2.1-2.5-2-2.8-1.8-3.1-1-2.2-1.3-3.6-0.7-2.3-0.5-2.4-0.4-3.8-0.1-2.3 0.2-3.8 0.5-3.3M1008.7 381.6l-2 3-2.5 3.2-2.8 3.2-2.7 2.6-3 2.7-2.7 2.1-3.2 2.3-3.8 2.5M986 412.6l-0.1 2.2-0.3 2.2-0.4 2.2-0.7 2.1-0.7 2.1-1 2-1.4 2.6-1.9 2.6M991.4 296.1l-0.2 3.8-0.3 2.7 4.5 2.8 4 3 3.6 3.3 2.9 3.1M878.7 432.3l-1.3-2-1-1.8-1.4-2.9-1.1-3.1-0.6-2.1-0.4-2.1-0.3-2.1-0.1-2.1 0-2.1M872.9 401.8l0.2-2.4-1.7-4-1.3-3.6-1.4-4.5-0.9-3.3-0.8-4-0.6-4-0.4-4.5 0-3 0.2-5 0.7-5.1 0.9-3.9 1.3-4 1.8-4.3 0.8-1.5 1.6-2.7 1.6-2.3 2.2-2.9 3.2-3.4-3.6-3-1.9-1.9-2.2-2.4-3.3-4.5-1.8-3.2-1.1-2.4-1.5-3.9-0.7-2.5-0.5-2.6-0.5-4 0-4.1 0.1-2.8M1005.9 390.1l-3.4 3.6-3.9 3.7-2 1.7-3.2 2.4-4.7 3.2M988.7 414.7l-0.3 2.1-0.3 2-0.5 2.1-0.7 2-0.7 1.9-1.3 2.5-1.2 2.2-1.5 2.2M994.1 298.9l-0.2 2.2 4.5 3 2.8 2.2 1.9 1.7M865.3 353.2l0.7-2.2 1.1-3.1 2.1-4.5 1.7-2.8 1.7-2.5 3.6-4.5-3.4-3.2-2.3-2.5-2.1-2.8-1.4-2-1.7-2.9M876.1 433.3l-1-1.5-1.1-2-1.2-2.3-1.3-3.5-0.9-2.9-0.4-2.3-0.3-2.3-0.2-2.3 0-2.3M870.3 399.9l-1.5-3.5-1.3-3.7-1.1-3.2-1.1-4.1M1003.1 397.1l-2.7 2.4-3.2 2.7-3 2.2-2.7 1.8M991.4 414.9l-0.2 2.3-0.4 2.2-0.5 2.2-0.7 2.2-0.9 2.1-1.3 2.7-1.3 2.3-1.3 1.9M868.1 339.9l1.4-2.2 2.9-3.8-1.6-1.6-2.7-3M873.2 433.9l-1.7-2.8-1.2-2.5-1.5-3.8-0.7-2.6M1000.3 403.2l-2.3 1.9-3.7 2.6M994.2 414.8l-0.5 4.3-0.5 2.1-0.5 2.1-1.6 4-2.2 4.3-1.4 2.3M997.6 408.8l-0.5 0.4M997 414.7l-0.2 2-0.6 4.1-1.1 4-0.7 2-0.8 1.9-1.3 2.4" stroke="#00e400" stroke-width="1.100" fill="none"/>
<rect x="832" y="265.6" width="204.4" height="204.4" stroke="#ff0000" stroke-width="2.200" fill="none"/>
<path d="M910.8 314.2l-1.5-0.2-3-0.7-1.5-0.5-2.7-1.4-3.8-2.7-2.3-2.2-0.9-1.2-0.7-1.4-0.5-1.4-0.2-1.6 0-1.5 0.3-1.6 0.5-1.5 0.8-1.4 1-1.2 1.1-1 1.4-0.7 1.5-0.4 3.1-0.4 3.1 0.3 1.5 0.5 1.3 0.7 2.3 2 2 2.4 2.3 4 1.9 4.2 7-3.6 1.7-4.2 1.4-2.7 1.6-2.5 1.8-2.5 2-2.3 2.2-2.1 1.2-0.9 2.6-1.6 1.4-0.6 3-0.8 3 0 1.5 0.2 2.9 0.9 1.4 0.7 2.6 1.6 2.3 2.1 1 1.2 1.5 2.6 0.5 1.4 0.3 1.5 0.2 3-0.5 3.1-1 2.9-1.6 2.6-1 1.1-1 1.1-2.4 1.9-9 5.6 0.4 3.2 0.6 3.2 1 3.1 1.9 4.5 2.7-1.6 2.8-1.1 3-0.7 2.9-0.4 3 0 3 0.3 3 0.7 4.3 1.5 2.8 1.4 2.5 1.6 2.4 1.9 2.1 2.2 1.8 2.4 1.5 2.6 1.2 2.8 0.9 2.9 0.8 4.6 0.2 3-0.2 3-0.5 3-0.9 2.9-1.2 2.7-1.6 2.7-1.8 2.4-2 2.3-3.3 3.1-2.4 1.8-3.8 2.5-4 2.2-4.1 1.9-11.2 4.4-1 2.9-1.1 4.4-0.4 3-0.3 3.1 7.6 0.2 0.9 0.4 0.3 1 0 9.6-0.7 1.2-1 0.7-1.3 0.3-1.4-0.1-5.9 41.3-0.4 1-0.8 0.6-0.8 0.1-30.7 0-1-0.4-0.5-0.9-6.8-40.9-1.4 0.1-1.2-0.4-0.8-0.8-0.5-1.2 0.4-10.2 0.2-0.8 0.4-0.3 0.5-0.2 6.3-0.7-2.1-2.2-2.9-3.6-2.5-3.8-2.2-4-1.7-4.3-1.4-4.3-1-4.5-0.5-4.6 0.2-4.6 0.7-3 0.5-1.4 0.6-1.4 1.7-2.5 2.1-2.3 2.2-2.1 2.4-1.9 2.6-1.6 4.1-2 3-0.9 2.9-0.6 6.1-0.7-3.7-2.8-3.2-3.3-2.9-3.7-1.5-2.7-1.8-4.3-1.2-4.5-0.6-4.6 0.1-4.6z" stroke="#ff0000" stroke-width="2.200" fill="none" stroke-linejoin="round"/>
<g fill="none" stroke="#ff5a14" stroke-width="1.100" stroke-dasharray="1 1.700"><path d="M449 287.5L463.5 274.5L472 272.5L487 276L540 306.5L575 322"/><path d="M535.3 312L535.3 416"/><path d="M540.8 310L540.8 420"/><path d="M449 394.6L540 392.8L601 391L637.5 392.3"/><path d="M506.8 417L507.3 467"/><path d="M533.7 435.5L507.5 465"/><path d="M449 473.4L520 471.8L594 470.4"/><path d="M800 470.6L825 470.4"/><path d="M731 284L769.6 375.4"/><path d="M734 284L764.5 378.8L771.6 392"/><path d="M771.6 376L771.6 416"/><path d="M768.6 380L768.6 414"/><path d="M637.5 392.3L639 426"/><path d="M637.5 392.3L705 401L806 413.5L866 422.8"/><path d="M669.7 411L764.5 429.6"/><path d="M637.5 427.9L739 409"/><path d="M962.5 268.8L962.5 299"/><path d="M988 303L990.5 350L994.5 409"/><path d="M866.5 342L866 429"/><path d="M869.5 342L872 432"/><path d="M874.3 434.7L994.5 446.5"/><path d="M994.5 424L962.3 463.4"/><path d="M960.6 416L960.6 463.4"/></g>
<g fill="none" stroke="#ff5a14" stroke-width="1"><path d="M920 285.7L992.8 301"/><path d="M920 285.7L889.5 348.3"/></g>
<path d="M504.8 415.5L540 422.5" stroke="#f4e800" stroke-width="5" stroke-dasharray="1.300 0.700" fill="none"/>
<path d="M635.9 426.2L669.7 409.3" stroke="#f4e800" stroke-width="4.5" stroke-dasharray="1.300 0.700" fill="none"/>
<path d="M745.9 394L774.6 385.6" stroke="#f4e800" stroke-width="4" stroke-dasharray="1.300 0.700" fill="none"/>
<path d="M724 285.5L736 280.5" stroke="#f4e800" stroke-width="6" stroke-dasharray="1.300 0.700" fill="none"/>
<path d="M869.2 338.2L891.2 349" stroke="#f4e800" stroke-width="4.5" stroke-dasharray="1.300 0.700" fill="none"/>
<path d="M962.3 299.4L992.8 302.6" stroke="#f4e800" stroke-width="3.5" stroke-dasharray="1.300 0.700" fill="none"/>
<path d="M994.5 421.5L1031.7 424.5" stroke="#f4e800" stroke-width="4.5" stroke-dasharray="1.300 0.700" fill="none"/>
<path d="M535 303.5L545 308" stroke="#f4e800" stroke-width="6" stroke-dasharray="1.300 0.700" fill="none"/>
<path d="M918 283L923 285.5" stroke="#f4e800" stroke-width="5" stroke-dasharray="1.300 0.700" fill="none"/>
<g fill="none" stroke="#f4e800" stroke-width="1.200" stroke-dasharray="1.500 2"><path d="M537 315L570 315"/><path d="M537 319L570 319"/><path d="M600 390.8L637.5 390.8"/><path d="M600 393.8L637.5 393.8"/><path d="M735.7 411L773 417"/><path d="M737 414L770 420"/><path d="M960.6 267L960.6 276"/><path d="M957.6 267L957.6 276"/><path d="M957.3 416L994.5 422.5"/><path d="M996.2 431L996.2 446.5"/><path d="M999.2 431L999.2 446.5"/><path d="M462.5 268.5L462.5 272"/><path d="M483.5 268.5L483.5 272"/></g>
<g fill="none" stroke="#f4e800" stroke-width="1.100"><path d="M589.5 465L594 470.2L599.5 465"/><path d="M820.5 465L825 470.2L830.5 465"/><path d="M701.5 366L705.8 370.2"/><path d="M705.8 366L701.5 370.2"/><path d="M720.5 274L726.5 267.5L722 267.5"/><path d="M760 432L764.5 428L769 434"/><path d="M861 417L871 428"/><path d="M871 417L860 429"/><path d="M966 457L961.5 462.5L966 468"/><path d="M510.5 458L506.5 464L510.5 468"/><path d="M532 436L540 436.8"/><path d="M470 270L474 273"/><path d="M465 275L466 279L469 276"/></g>

</svg>

<div class="abs" id="left"></div>
<div class="abs" style="left:2px;top:73px;width:68px;height:25px;background:#f0f0f0;border-right:2px solid #8a8a8a;border-left:1px solid #fff;border-top:1px solid #fff"></div>
<div class="abs" style="left:70px;top:75px;width:72px;height:21px;background:#f9f9f9;border-right:2px solid #8a8a8a;border-top:1px solid #fff"></div>
<svg class="abs" style="left:10px;top:74px" width="84" height="20" viewBox="0 0 84 20"><path d="M1.500 1.500h7l3 3v9h-10z" fill="#fff" stroke="#000"/><path d="M8.500 1.500v3h3" fill="none" stroke="#000"/><path d="M66.600 16 L76.200 6.400" stroke="#868686" stroke-width="3.400" stroke-linecap="round" fill="none"/><circle cx="77" cy="5.600" r="3.600" fill="#868686"/><path d="M77.300 5.300l1.600-4.600 4 4.200z" fill="#f9f9f9"/><circle cx="65.600" cy="16.800" r="2.900" fill="#868686"/><path d="M65.300 17.100l-3.800.6 3 3.400z" fill="#f9f9f9"/></svg>
<div class="tr" style="left:30.700px;top:77px;font-size:11.600px;letter-spacing:-0.843px">Dessin</div>
<div class="tr" style="left:96.300px;top:78px;font-size:11.600px;letter-spacing:-0.918px">Système</div>
<div class="abs" style="left:314px;top:94px;width:1.300px;height:254px;background:#787878"></div>
<div class="abs" id="tree"></div>
<div class="abs" style="left:291px;top:100px;width:16px;height:242px;background:#f0f0f0"></div>
<div class="abs" style="left:291px;top:130px;width:16px;height:212px;background:#cdcdcd"></div>
<svg class="abs" style="left:291px;top:100px" width="16" height="17" viewBox="0 0 16 17"><path d="M4.300 10.300l3.400-3.400 3.400 3.400" fill="none" stroke="#484848" stroke-width="2"/></svg>
<svg class="abs" style="left:9px;top:101px" width="282" height="241" viewBox="9 100 282 241"><defs><g id="exp"><rect x="-4" y="-4" width="8" height="8" fill="#fff" stroke="#808080"/><path d="M-2.500 0h5" stroke="#000" stroke-width="1"/></g><linearGradient id="fg" x1="0" y1="0" x2="1" y2="0"><stop offset="0" stop-color="#f29a00"/><stop offset=".55" stop-color="#ffc21a"/><stop offset="1" stop-color="#ffd83a"/></linearGradient><g id="fold"><path d="M1 .400L15.500 .700V3.500H1z" fill="#4a2a00"/><path d="M1.300 2.600L3 1.700 15.500 1.500V9.700L2.600 14.300z" fill="url(#fg)"/><path d="M1.300 2.600L2.600 14.300" stroke="#c77800" stroke-width="1"/><circle cx="11.600" cy="7" r="1.500" fill="#ffff30" opacity=".85"/></g><g id="lay"><path d="M1 10.300l1.300 2.200h8.700l1.800-2.500" fill="#3a3a3a" stroke="#3a3a3a" stroke-width=".8"/><path d="M4.800 2.500h10l-3.600 7h-10z" fill="#fff" stroke="#000" stroke-width="1.100"/></g><g id="poly"><rect x="1" y="1" width="14" height="14" fill="#000080"/><rect width="14" height="14" fill="#008000"/><path d="M2.300 2.600h6.700l2.300 1.900v3.200l-2.300 1.900h-2.400v2.100h-4.300z" fill="#008000" stroke="#fff" stroke-width="1.300"/><path d="M3.600 10.300v-6.400h5" stroke="#000" stroke-width="1" fill="none"/></g><g id="spl"><rect x="1" y="1" width="14" height="14" fill="#000080"/><rect width="14" height="14" fill="#008000"/><g transform="translate(.7,.7)" stroke="#000" fill="none" stroke-width="1.300"><path d="M2.400 10.400C2.400 7.600 4.500 6.300 6.600 6.900 9 7.600 10.500 9 11.300 10.400"/><path d="M6.900 3C9.600 3.400 11.300 6 11.300 9.800"/></g><g stroke="#fff" fill="none" stroke-width="1.400"><path d="M2.400 10.400C2.400 7.600 4.500 6.300 6.600 6.900 9 7.600 10.500 9 11.300 10.400"/><path d="M6.900 3C9.600 3.400 11.300 6 11.300 9.800"/></g><g fill="#fff"><rect x="1" y="9" width="2.800" height="2.800"/><rect x="5.300" y="1.700" width="2.800" height="2.600"/><rect x="9.900" y="9.200" width="2.800" height="2.800"/></g></g><g id="cube"><path d="M7.500 .8l6.200 3v7l-6.200 3.400-6.200-3.400v-7z" fill="#000"/><path d="M7.500 2l5 2.400-5 2.600-5-2.600z" fill="#f4f000"/><path d="M2.300 5.400l4.700 2.500v5.300l-4.700-2.600z" fill="#c8c8c8"/><path d="M12.700 5.400l-4.700 2.500v5.300l4.700-2.600z" fill="#8c8c8c"/></g><g id="pock"><rect x="1" y="1" width="14" height="14" fill="#000080"/><rect width="14" height="14" fill="#c05a28"/><rect x="1.500" y="1.500" width="11" height="11" fill="none" stroke="#fff"/><rect x="3.500" y="3.500" width="7" height="7" fill="none" stroke="#fff"/><rect x="5.500" y="5.500" width="3" height="3" fill="none" stroke="#fff"/></g><g id="prof"><rect x="1" y="1" width="14" height="14" fill="#000080"/><rect width="14" height="14" fill="#c05a28"/><circle cx="7" cy="7" r="5.300" fill="none" stroke="#000"/><circle cx="7" cy="7" r="4" fill="#c87830" stroke="#ffff00" stroke-width="1.300"/></g></defs><g stroke="#9a9a9a" stroke-width="1" stroke-dasharray="1 1" fill="none"><path d="M36.500 100V267"/><path d="M41 107.500H47"/><path d="M41 267.500H47"/><path d="M55.500 114V135"/><path d="M56 123.500H66"/><path d="M60 139.500H66"/><path d="M74.500 147V251.500"/><path d="M75 155.5H86"/><path d="M75 171.5H86"/><path d="M75 187.5H86"/><path d="M75 203.5H86"/><path d="M75 219.5H86"/><path d="M75 235.5H86"/><path d="M75 251.5H86"/><path d="M55.500 274V279"/><path d="M55.500 288V311"/><path d="M60 283.500H67"/><path d="M60 315.500H67"/><path d="M74.500 291V300"/><path d="M75 299.500H86"/><path d="M74.500 323V332"/><path d="M75 331.500H86"/></g><use href="#exp" x="36.5" y="107.5"/><use href="#exp" x="55.5" y="139.5"/><use href="#exp" x="36.5" y="267.5"/><use href="#exp" x="55.5" y="283.5"/><use href="#exp" x="55.5" y="315.5"/><use href="#fold" x="47" y="100"/><use href="#fold" x="47" y="260"/><use href="#lay" x="66" y="118"/><use href="#lay" x="66" y="134"/><path d="M66 134.500l7.500 4.500-7.500 4.500z" fill="#00e000" stroke="#004000" stroke-width=".6"/><use href="#poly" x="86" y="148"/><use href="#poly" x="86" y="164"/><use href="#poly" x="86" y="180"/><use href="#poly" x="86" y="196"/><use href="#spl" x="86" y="212"/><use href="#spl" x="86" y="228"/><use href="#spl" x="86" y="244"/><use href="#cube" x="66.500" y="276"/><use href="#pock" x="86" y="292"/><use href="#cube" x="66.500" y="308"/><path d="M66 310.500l7.500 4.500-7.500 4.500z" fill="#00e000" stroke="#004000" stroke-width=".6"/><use href="#prof" x="86" y="324"/><rect x="104" y="291.200" width="41" height="15.500" fill="#3399ff"/></svg>
<div class="tr" style="left:67.5px;top:101.0px;font-size:11.600px;letter-spacing:-0.723px">Calques</div>
<div class="tr" style="left:87.5px;top:117.0px;font-size:11.600px;letter-spacing:-0.651px">0</div>
<div class="tr" style="left:86.25px;top:133.0px;font-size:11.600px;letter-spacing:-0.648px">Calque 1</div>
<div class="tr" style="left:106.25px;top:149.0px;font-size:11.600px;letter-spacing:-0.633px">Polyligne (1)</div>
<div class="tr" style="left:106.25px;top:165.0px;font-size:11.600px;letter-spacing:-0.633px">Polyligne (2)</div>
<div class="tr" style="left:106.25px;top:181.0px;font-size:11.600px;letter-spacing:-0.633px">Polyligne (3)</div>
<div class="tr" style="left:106.25px;top:197.0px;font-size:11.600px;letter-spacing:-0.633px">Polyligne (4)</div>
<div class="tr" style="left:106.25px;top:213.0px;font-size:11.600px;letter-spacing:-0.64px">Spline (5)</div>
<div class="tr" style="left:106.25px;top:229.0px;font-size:11.600px;letter-spacing:-0.64px">Spline (6)</div>
<div class="tr" style="left:106.25px;top:245.0px;font-size:11.600px;letter-spacing:-0.64px">Spline (7)</div>
<div class="tr" style="left:68.75px;top:261.0px;font-size:11.600px;letter-spacing:-0.723px">Usinage</div>
<div class="tr" style="left:86.25px;top:277.0px;font-size:11.600px;letter-spacing:-0.321px">poche</div>
<div class="tr" style="left:106.25px;top:293.0px;font-size:11.600px;letter-spacing:-0.515px;color:#fff">Poche1</div>
<div class="tr" style="left:86.25px;top:309.0px;font-size:11.600px;letter-spacing:-0.465px">découpe</div>
<div class="tr" style="left:105.5px;top:325.0px;font-size:11.600px;letter-spacing:-0.64px">Contour1</div>
<div class="abs" style="left:0;top:343px;width:316px;height:5px;background:#f9f9f9"></div>
<div class="abs" style="left:0;top:348px;width:316px;height:3px;background:linear-gradient(#8e8e8e,#b8b8b8 45%,#e6e6e6)"></div>
<div class="abs" style="left:5px;top:355px;width:23px;height:22px;background:#cce4f7;border:1px solid #3a94e6"></div>
<svg class="abs" style="left:5px;top:355px" width="60" height="22" viewBox="0 0 60 22"><g fill="#fff" stroke="#3a3a3a" stroke-width=".8"><rect x="4.500" y="3.500" width="5" height="5"/><rect x="4.500" y="12.500" width="5" height="5"/></g><path d="M5.500 6h3M7 4.500v3M5.500 15h3M7 13.500v3" stroke="#000" stroke-width=".8"/><path d="M11.500 4.500h7M11.500 6.500h7M11.500 8.500h7M11.500 11.500h7M11.500 13.500h7M11.500 15.500h7M11.500 17.500h7" stroke="#6a7a9a" stroke-width=".8"/><text x="31.500" y="10" font-family="Liberation Serif,serif" font-size="9" font-weight="bold" fill="#3050b0">A</text><text x="31.500" y="19" font-family="Liberation Serif,serif" font-size="9" font-weight="bold" fill="#903030">Z</text><path d="M44.500 3.500v13M42.500 14l2 3 2-3" fill="none" stroke="#000" stroke-width="1"/></svg>
<div class="t" style="left:66.200px;top:359px;font-size:11.8px;line-height:14px;letter-spacing:-0.263px">Basique</div>
<div class="abs" style="left:116px;top:357px;width:1px;height:17px;background:#d0d0d0"></div>
<div class="abs" style="left:128px;top:358px;width:6px;height:14px;background:#20c0c0;border-bottom:1px solid #2040a0"></div>
<div class="abs" style="left:0;top:377.7px;width:299px;height:367.5px;background:#fff"></div>
<div class="abs" style="left:0;top:377.7px;width:14px;height:367.5px;background:#d7e2f0"></div>
<div class="abs" style="left:299px;top:377.7px;width:17px;height:367.5px;background:#f0f0f0"></div>
<svg class="abs" style="left:299px;top:728px" width="17" height="17" viewBox="0 0 17 17"><path d="M5.300 6.600l3.400 3.400 3.400-3.400" fill="none" stroke="#484848" stroke-width="2"/></svg>
<div class="cat" style="top:378.2px;height:19.00px"></div>
<div class="catt" style="top:380.9px;letter-spacing:-0.152px">(Général)</div>
<div class="abs" style="left:14px;top:413.7px;width:285px;height:1px;background:#dfe6f0"></div>
<div class="pl" style="top:399.7px;width:131px;overflow:hidden;letter-spacing:-0.103px">Activé</div>
<div class="abs" style="left:14px;top:430.7px;width:285px;height:1px;background:#dfe6f0"></div>
<div class="pl" style="top:416.7px;width:131px;overflow:hidden;letter-spacing:-0.133px">ID Primitives</div>
<div class="abs" style="left:14px;top:447.7px;width:285px;height:1px;background:#dfe6f0"></div>
<div class="pl" style="top:433.7px;width:131px;overflow:hidden;letter-spacing:-0.406px">Infos</div>
<div class="abs" style="left:14px;top:464.7px;width:285px;height:1px;background:#dfe6f0"></div>
<div class="pl" style="top:450.7px;width:131px;overflow:hidden;letter-spacing:-0.46px">Nom</div>
<div class="abs" style="left:14px;top:481.7px;width:285px;height:1px;background:#dfe6f0"></div>
<div class="pl" style="top:467.7px;width:131px;overflow:hidden;letter-spacing:-0.113px">Style</div>
<div class="cat" style="top:482.2px;height:19.00px"></div>
<div class="catt" style="top:484.9px;letter-spacing:-0.127px">Choix de l'outil</div>
<div class="abs" style="left:14px;top:517.7px;width:285px;height:1px;background:#dfe6f0"></div>
<div class="pl" style="top:503.7px;width:131px;overflow:hidden;letter-spacing:-0.167px">Diamètre de l'outil</div>
<div class="abs" style="left:14px;top:534.7px;width:285px;height:1px;background:#dfe6f0"></div>
<div class="pl" style="top:520.7px;width:131px;overflow:hidden;letter-spacing:-0.216px">Forme d'outil</div>
<div class="abs" style="left:14px;top:551.7px;width:285px;height:1px;background:#dfe6f0"></div>
<div class="pl" style="top:537.7px;width:131px;overflow:hidden;letter-spacing:-0.249px">Numéro d'outil</div>
<div class="cat" style="top:552.2px;height:19.00px"></div>
<div class="catt" style="top:554.9px;letter-spacing:-0.226px">Contrôle de broche</div>
<div class="abs" style="left:14px;top:587.7px;width:285px;height:1px;background:#dfe6f0"></div>
<div class="pl" style="top:573.7px;width:131px;overflow:hidden;letter-spacing:-0.219px">Gamme de vitesses</div>
<div class="abs" style="left:14px;top:604.7px;width:285px;height:1px;background:#dfe6f0"></div>
<div class="pl" style="top:590.7px;width:131px;overflow:hidden;letter-spacing:-0.266px">Sens de rotation</div>
<div class="abs" style="left:14px;top:621.7px;width:285px;height:1px;background:#dfe6f0"></div>
<div class="pl" style="top:607.7px;width:131px;overflow:hidden;letter-spacing:-0.192px">Vitesse de rotation</div>
<div class="cat" style="top:622.2px;height:19.00px"></div>
<div class="catt" style="top:624.9px;letter-spacing:-0.222px">Contrôle des avances</div>
<div class="abs" style="left:14px;top:657.7px;width:285px;height:1px;background:#dfe6f0"></div>
<div class="pl" style="top:643.7px;width:131px;overflow:hidden;letter-spacing:-0.173px">Vitesse d'avance</div>
<div class="pv" style="top:643.7px">500</div>
<div class="abs" style="left:14px;top:674.7px;width:285px;height:1px;background:#dfe6f0"></div>
<div class="pl" style="top:660.7px;width:131px;overflow:hidden;letter-spacing:-0.174px">Vitesse d'avance en plongée</div>
<div class="pv" style="top:660.7px;font-style:italic;color:#8a8a8a">300</div>
<div class="cat" style="top:675.2px;height:19.00px"></div>
<div class="catt" style="top:677.9px;letter-spacing:-0.197px">Contrôle des déplacements latéraux</div>
<div class="abs" style="left:14px;top:710.7px;width:285px;height:1px;background:#dfe6f0"></div>
<div class="pl" style="top:696.7px;width:131px;overflow:hidden;letter-spacing:-0.185px">Déplacement latéral maxi</div>
<div class="pv" style="top:696.7px">0.4</div>
<div class="abs" style="left:14px;top:727.7px;width:285px;height:1px;background:#dfe6f0"></div>
<div class="pl" style="top:713.7px;width:131px;overflow:hidden;letter-spacing:-0.174px">Dernière passe à profondeur</div>
<div class="pv" style="top:713.7px;font-style:italic;color:#8a8a8a">Faux</div>
<div class="abs" style="left:14px;top:744.7px;width:285px;height:1px;background:#dfe6f0"></div>
<div class="pl" style="top:730.7px;width:131px;overflow:hidden;letter-spacing:-0.257px">Recouvrement</div>
<div class="pv" style="top:730.7px;font-style:italic;color:#8a8a8a">0.4</div>
<div class="abs" style="left:164px;top:641.2px;width:1px;height:34.0px;background:#dfe6f0"></div>
<div class="abs" style="left:164px;top:694.2px;width:1px;height:51.0px;background:#dfe6f0"></div>
<svg class="abs" style="left:0;top:0" width="170" height="768" viewBox="0 0 170 768"><rect x="2.500" y="383.8" width="8" height="8" fill="none" stroke="#444" stroke-width=".9"/><path d="M4.500 387.8h4" stroke="#000" stroke-width=".9"/><rect x="2.500" y="487.8" width="8" height="8" fill="none" stroke="#444" stroke-width=".9"/><path d="M4.500 491.8h4" stroke="#000" stroke-width=".9"/><rect x="2.500" y="557.8" width="8" height="8" fill="none" stroke="#444" stroke-width=".9"/><path d="M4.500 561.8h4" stroke="#000" stroke-width=".9"/><rect x="2.500" y="627.8" width="8" height="8" fill="none" stroke="#444" stroke-width=".9"/><path d="M4.500 631.8h4" stroke="#000" stroke-width=".9"/><circle cx="155.500" cy="649.5" r="6" fill="#fff" stroke="#2db92d" stroke-width="2"/><path d="M152.500 649.5h5M155.500 647.0l2.700 2.500-2.700 2.500" fill="none" stroke="#2db92d" stroke-width="1.600"/><circle cx="155.500" cy="666.5" r="6" fill="#fff" stroke="#c8c8c8" stroke-width="2"/><path d="M158.500 666.5h-5M155.500 664.0l-2.700 2.500 2.700 2.500" fill="none" stroke="#c8c8c8" stroke-width="1.600"/><rect x="2.500" y="680.8" width="8" height="8" fill="none" stroke="#444" stroke-width=".9"/><path d="M4.500 684.8h4" stroke="#000" stroke-width=".9"/><circle cx="155.500" cy="702.5" r="6" fill="#fff" stroke="#2db92d" stroke-width="2"/><path d="M152.500 702.5h5M155.500 700.0l2.700 2.500-2.700 2.500" fill="none" stroke="#2db92d" stroke-width="1.600"/><circle cx="155.500" cy="719.5" r="6" fill="#fff" stroke="#c8c8c8" stroke-width="2"/><path d="M158.500 719.5h-5M155.500 717.0l-2.700 2.500 2.700 2.500" fill="none" stroke="#c8c8c8" stroke-width="1.600"/><circle cx="155.500" cy="736.5" r="6" fill="#fff" stroke="#c8c8c8" stroke-width="2"/><path d="M158.500 736.5h-5M155.500 734.0l-2.700 2.500 2.700 2.500" fill="none" stroke="#c8c8c8" stroke-width="1.600"/></svg>

<div class="abs" id="ctx"></div>
<div class="abs" style="left:134px;top:301px;width:27px;height:327px;background:#f5f5f5"></div>
<div class="abs" style="left:134.500px;top:323.500px;width:313.500px;height:22px;background:#c7e0fc;border:1px solid #3d99f5"></div>
<div class="cm" style="left:168.200px;top:306.1px;font-size:12.5px;letter-spacing:-0.348px">Générer les parcours d'outil</div>
<div class="cm" style="left:168.200px;top:328.1px;font-size:12.5px;letter-spacing:-0.434px">Créer le fichier GCode</div>
<div class="cm" style="left:168.200px;top:356.1px;font-size:12.5px;letter-spacing:-0.441px">Sélectionner les objets de dessin</div>
<div class="cm" style="left:168.200px;top:378.1px;font-size:12.5px;letter-spacing:-0.223px">Définir le point de départ</div>
<div class="cm" style="left:168.200px;top:400.1px;font-size:12.5px;letter-spacing:-0.254px">Convertir les parcours d'outil en géométries</div>
<div class="cm" style="left:168.200px;top:422.1px;font-size:12.5px;letter-spacing:-0.357px">Calculateur de vitesses d'avance et de rotation</div>
<div class="cm" style="left:168.200px;top:450.1px;font-size:12.5px;letter-spacing:-0.226px">Activer / Désactiver l'opération</div>
<div class="cm" style="left:168.200px;top:478.1px;font-size:12.5px;letter-spacing:-0.4px">Couper</div>
<div class="cm" style="left:384.2px;top:478.1px;font-size:12.5px;letter-spacing:-0.246px">Ctrl+X</div>
<div class="cm" style="left:168.200px;top:500.1px;font-size:12.5px;letter-spacing:-0.354px">Copier</div>
<div class="cm" style="left:383.4px;top:500.1px;font-size:12.5px;letter-spacing:-0.228px">Ctrl+C</div>
<div class="cm" style="left:168.200px;top:522.1px;font-size:12.5px;letter-spacing:-0.308px">Coller</div>
<div class="cm" style="left:384.2px;top:522.1px;font-size:12.5px;letter-spacing:-0.246px">Ctrl+V</div>
<div class="cm" style="left:168.200px;top:544.1px;font-size:12.5px;letter-spacing:-0.209px">Coller le format</div>
<div class="cm" style="left:352.1px;top:544.1px;font-size:12.5px;letter-spacing:-0.141px">Shift+Ctrl+V</div>
<div class="cm" style="left:168.200px;top:566.1px;font-size:12.5px;letter-spacing:-0.318px">Supprimer</div>
<div class="cm" style="left:398.3px;top:566.1px;font-size:12.5px;letter-spacing:-1.606px">DEL</div>
<div class="cm" style="left:168.200px;top:588.1px;font-size:12.5px;letter-spacing:-0.39px">Renommer</div>
<div class="cm" style="left:168.200px;top:610.1px;font-size:12.5px;letter-spacing:-0.402px">Réinitialiser aux valeurs par défaut</div>
<div class="abs" style="left:165px;top:349px;width:283px;height:1px;background:#c6c6c6"></div>
<div class="abs" style="left:165px;top:443px;width:283px;height:1px;background:#c6c6c6"></div>
<div class="abs" style="left:165px;top:471px;width:283px;height:1px;background:#c6c6c6"></div>

</body>
</html>
